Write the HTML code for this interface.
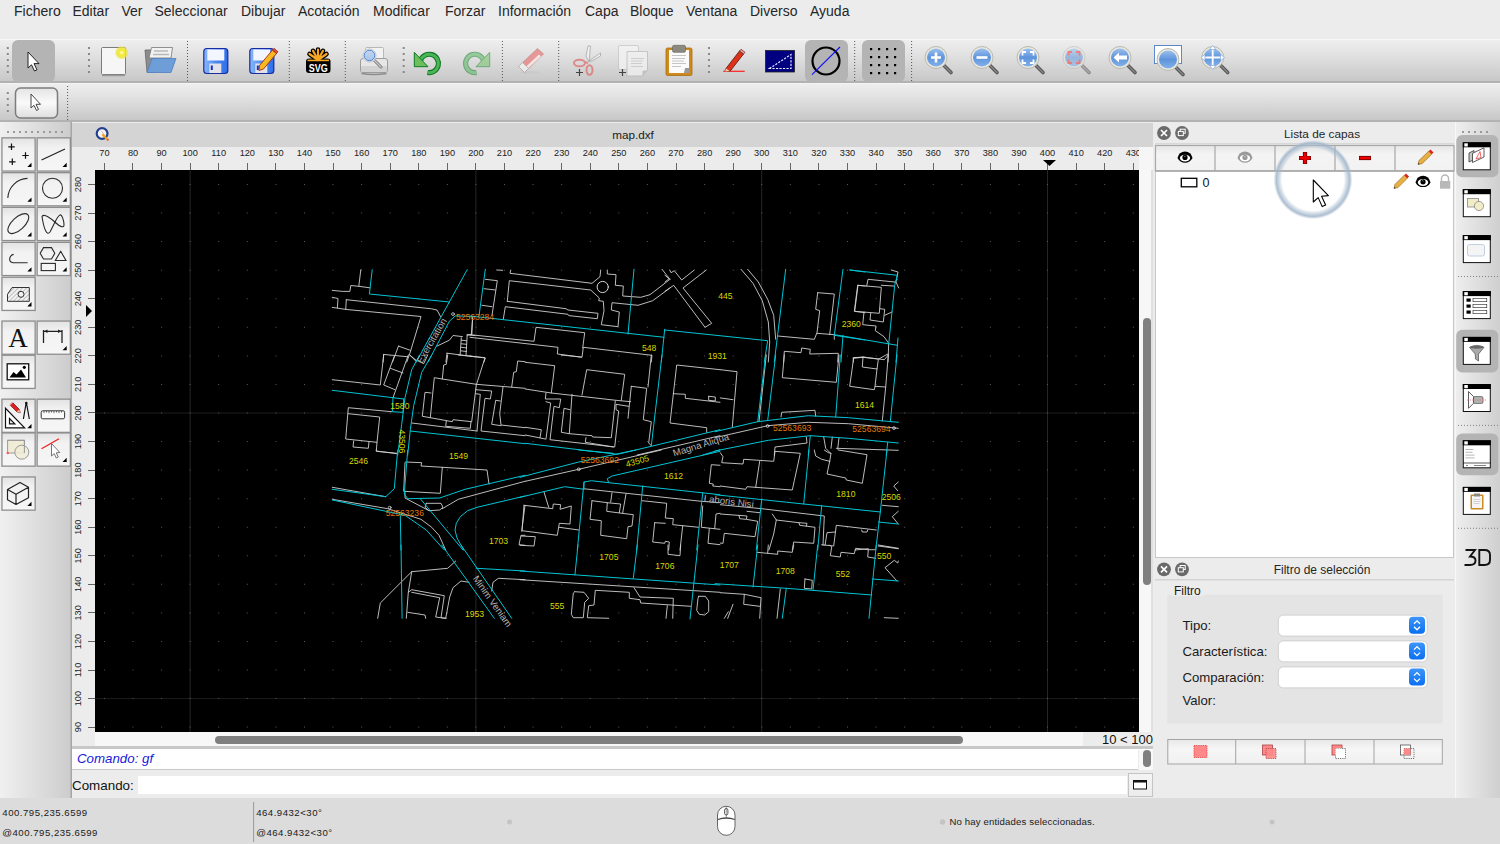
<!DOCTYPE html><html><head><meta charset="utf-8"><style>
*{box-sizing:border-box}
html,body{margin:0;padding:0;width:1500px;height:844px;overflow:hidden;background:#ececec;font-family:"Liberation Sans", sans-serif}
.a{position:absolute}
.menu span{position:absolute;top:3px;font-size:14px;color:#262626;line-height:16px}
.tb{position:absolute;left:0;width:1500px;background:linear-gradient(#eeeeee,#e2e2e2 35%,#c8c8c8);border-bottom:2px solid #b2b2b2}
.hl{position:absolute;background:#b4b4b4;border-radius:6px}
.sep{position:absolute;width:0;border-left:2px dotted #7a7a7a}
.hdl{position:absolute;width:3px;background:radial-gradient(circle,#8c8c8c 1px,transparent 1.3px) 0 0/3px 6px repeat-y}
.tbtn{position:absolute;width:35px;height:35px;border:2px solid #9c9c9c;background:linear-gradient(#f6f6f6,#e6e6e6 45%,#f6f6f6)}
</style></head><body><div class="a menu" style="left:0;top:0;width:1500px;height:39px;background:#ececec"><span style="left:14px">Fichero</span><span style="left:72.5px">Editar</span><span style="left:121.5px">Ver</span><span style="left:154.5px">Seleccionar</span><span style="left:241px">Dibujar</span><span style="left:298px">Acotación</span><span style="left:373px">Modificar</span><span style="left:445px">Forzar</span><span style="left:498px">Información</span><span style="left:585px">Capa</span><span style="left:630px">Bloque</span><span style="left:686px">Ventana</span><span style="left:750px">Diverso</span><span style="left:810px">Ayuda</span></div><div class="tb" style="top:39px;height:44px;border-top:1px solid #f8f8f8"></div><div class="tb" style="top:83px;height:39px;border-top:1px solid #f4f4f4"></div><div class="hl" style="left:12px;top:40px;width:43px;height:42px"></div><div class="hl" style="left:805px;top:40px;width:43px;height:42px"></div><div class="hl" style="left:862px;top:40px;width:43px;height:42px"></div><div class="a" style="left:0;top:122px;width:71px;height:676px;background:linear-gradient(90deg,#f0f0f0,#cdcdcd);border-right:1px solid #b8b8b8"></div><div class="a" style="left:71px;top:122px;width:1083px;height:676px;background:#ececec;border-left:1px solid #a8a8a8"></div><div class="a" style="left:72px;top:123px;width:1081px;height:24px;background:#d4d4d4"></div><div class="a" style="left:558px;top:128px;width:150px;text-align:center;font-size:11.7px;color:#1a1a1a">map.dxf</div><svg width="120" height="150" style="position:absolute;left:0;top:0"><circle cx="102.1" cy="133.5" r="5.4" fill="#f4f4f4" stroke="#22408e" stroke-width="2.2"/><path d="M101.5 131 L105 136" stroke="#d8a0a0" stroke-width="0.7"/><path d="M103 135 L107.5 139.5" stroke="#f0a020" stroke-width="2.2" stroke-linecap="round"/><circle cx="107.8" cy="139.8" r="1.1" fill="#e06060"/></svg><svg width="1500" height="844" style="position:absolute;left:0;top:0"><defs><clipPath id="rclip"><rect x="95" y="140" width="1044" height="35"/></clipPath><clipPath id="lclip"><rect x="72" y="170" width="23" height="562"/></clipPath></defs><rect x="72" y="147" width="1081" height="23" fill="#ececec"/><rect x="1139" y="147" width="14" height="23" fill="#f6f6f6"/><rect x="72" y="147" width="23" height="585" fill="#ececec"/><g clip-path="url(#rclip)"><line x1="104.5" y1="163" x2="104.5" y2="170" stroke="#666" stroke-width="1"/><text x="104.4" y="156.3" font-family=""Liberation Sans", sans-serif" font-size="9.2" fill="#222" text-anchor="middle">70</text><line x1="132.5" y1="163" x2="132.5" y2="170" stroke="#666" stroke-width="1"/><text x="133.0" y="156.3" font-family=""Liberation Sans", sans-serif" font-size="9.2" fill="#222" text-anchor="middle">80</text><line x1="161.5" y1="163" x2="161.5" y2="170" stroke="#666" stroke-width="1"/><text x="161.6" y="156.3" font-family=""Liberation Sans", sans-serif" font-size="9.2" fill="#222" text-anchor="middle">90</text><line x1="190.5" y1="163" x2="190.5" y2="170" stroke="#666" stroke-width="1"/><text x="190.1" y="156.3" font-family=""Liberation Sans", sans-serif" font-size="9.2" fill="#222" text-anchor="middle">100</text><line x1="218.5" y1="163" x2="218.5" y2="170" stroke="#666" stroke-width="1"/><text x="218.7" y="156.3" font-family=""Liberation Sans", sans-serif" font-size="9.2" fill="#222" text-anchor="middle">110</text><line x1="247.5" y1="163" x2="247.5" y2="170" stroke="#666" stroke-width="1"/><text x="247.3" y="156.3" font-family=""Liberation Sans", sans-serif" font-size="9.2" fill="#222" text-anchor="middle">120</text><line x1="275.5" y1="163" x2="275.5" y2="170" stroke="#666" stroke-width="1"/><text x="275.9" y="156.3" font-family=""Liberation Sans", sans-serif" font-size="9.2" fill="#222" text-anchor="middle">130</text><line x1="304.5" y1="163" x2="304.5" y2="170" stroke="#666" stroke-width="1"/><text x="304.5" y="156.3" font-family=""Liberation Sans", sans-serif" font-size="9.2" fill="#222" text-anchor="middle">140</text><line x1="333.5" y1="163" x2="333.5" y2="170" stroke="#666" stroke-width="1"/><text x="333.0" y="156.3" font-family=""Liberation Sans", sans-serif" font-size="9.2" fill="#222" text-anchor="middle">150</text><line x1="361.5" y1="163" x2="361.5" y2="170" stroke="#666" stroke-width="1"/><text x="361.6" y="156.3" font-family=""Liberation Sans", sans-serif" font-size="9.2" fill="#222" text-anchor="middle">160</text><line x1="390.5" y1="163" x2="390.5" y2="170" stroke="#666" stroke-width="1"/><text x="390.2" y="156.3" font-family=""Liberation Sans", sans-serif" font-size="9.2" fill="#222" text-anchor="middle">170</text><line x1="418.5" y1="163" x2="418.5" y2="170" stroke="#666" stroke-width="1"/><text x="418.8" y="156.3" font-family=""Liberation Sans", sans-serif" font-size="9.2" fill="#222" text-anchor="middle">180</text><line x1="447.5" y1="163" x2="447.5" y2="170" stroke="#666" stroke-width="1"/><text x="447.4" y="156.3" font-family=""Liberation Sans", sans-serif" font-size="9.2" fill="#222" text-anchor="middle">190</text><line x1="475.5" y1="163" x2="475.5" y2="170" stroke="#666" stroke-width="1"/><text x="475.9" y="156.3" font-family=""Liberation Sans", sans-serif" font-size="9.2" fill="#222" text-anchor="middle">200</text><line x1="504.5" y1="163" x2="504.5" y2="170" stroke="#666" stroke-width="1"/><text x="504.5" y="156.3" font-family=""Liberation Sans", sans-serif" font-size="9.2" fill="#222" text-anchor="middle">210</text><line x1="533.5" y1="163" x2="533.5" y2="170" stroke="#666" stroke-width="1"/><text x="533.1" y="156.3" font-family=""Liberation Sans", sans-serif" font-size="9.2" fill="#222" text-anchor="middle">220</text><line x1="561.5" y1="163" x2="561.5" y2="170" stroke="#666" stroke-width="1"/><text x="561.7" y="156.3" font-family=""Liberation Sans", sans-serif" font-size="9.2" fill="#222" text-anchor="middle">230</text><line x1="590.5" y1="163" x2="590.5" y2="170" stroke="#666" stroke-width="1"/><text x="590.3" y="156.3" font-family=""Liberation Sans", sans-serif" font-size="9.2" fill="#222" text-anchor="middle">240</text><line x1="618.5" y1="163" x2="618.5" y2="170" stroke="#666" stroke-width="1"/><text x="618.8" y="156.3" font-family=""Liberation Sans", sans-serif" font-size="9.2" fill="#222" text-anchor="middle">250</text><line x1="647.5" y1="163" x2="647.5" y2="170" stroke="#666" stroke-width="1"/><text x="647.4" y="156.3" font-family=""Liberation Sans", sans-serif" font-size="9.2" fill="#222" text-anchor="middle">260</text><line x1="676.5" y1="163" x2="676.5" y2="170" stroke="#666" stroke-width="1"/><text x="676.0" y="156.3" font-family=""Liberation Sans", sans-serif" font-size="9.2" fill="#222" text-anchor="middle">270</text><line x1="704.5" y1="163" x2="704.5" y2="170" stroke="#666" stroke-width="1"/><text x="704.6" y="156.3" font-family=""Liberation Sans", sans-serif" font-size="9.2" fill="#222" text-anchor="middle">280</text><line x1="733.5" y1="163" x2="733.5" y2="170" stroke="#666" stroke-width="1"/><text x="733.2" y="156.3" font-family=""Liberation Sans", sans-serif" font-size="9.2" fill="#222" text-anchor="middle">290</text><line x1="761.5" y1="163" x2="761.5" y2="170" stroke="#666" stroke-width="1"/><text x="761.7" y="156.3" font-family=""Liberation Sans", sans-serif" font-size="9.2" fill="#222" text-anchor="middle">300</text><line x1="790.5" y1="163" x2="790.5" y2="170" stroke="#666" stroke-width="1"/><text x="790.3" y="156.3" font-family=""Liberation Sans", sans-serif" font-size="9.2" fill="#222" text-anchor="middle">310</text><line x1="818.5" y1="163" x2="818.5" y2="170" stroke="#666" stroke-width="1"/><text x="818.9" y="156.3" font-family=""Liberation Sans", sans-serif" font-size="9.2" fill="#222" text-anchor="middle">320</text><line x1="847.5" y1="163" x2="847.5" y2="170" stroke="#666" stroke-width="1"/><text x="847.5" y="156.3" font-family=""Liberation Sans", sans-serif" font-size="9.2" fill="#222" text-anchor="middle">330</text><line x1="876.5" y1="163" x2="876.5" y2="170" stroke="#666" stroke-width="1"/><text x="876.1" y="156.3" font-family=""Liberation Sans", sans-serif" font-size="9.2" fill="#222" text-anchor="middle">340</text><line x1="904.5" y1="163" x2="904.5" y2="170" stroke="#666" stroke-width="1"/><text x="904.6" y="156.3" font-family=""Liberation Sans", sans-serif" font-size="9.2" fill="#222" text-anchor="middle">350</text><line x1="933.5" y1="163" x2="933.5" y2="170" stroke="#666" stroke-width="1"/><text x="933.2" y="156.3" font-family=""Liberation Sans", sans-serif" font-size="9.2" fill="#222" text-anchor="middle">360</text><line x1="961.5" y1="163" x2="961.5" y2="170" stroke="#666" stroke-width="1"/><text x="961.8" y="156.3" font-family=""Liberation Sans", sans-serif" font-size="9.2" fill="#222" text-anchor="middle">370</text><line x1="990.5" y1="163" x2="990.5" y2="170" stroke="#666" stroke-width="1"/><text x="990.4" y="156.3" font-family=""Liberation Sans", sans-serif" font-size="9.2" fill="#222" text-anchor="middle">380</text><line x1="1018.5" y1="163" x2="1018.5" y2="170" stroke="#666" stroke-width="1"/><text x="1019.0" y="156.3" font-family=""Liberation Sans", sans-serif" font-size="9.2" fill="#222" text-anchor="middle">390</text><line x1="1047.5" y1="163" x2="1047.5" y2="170" stroke="#666" stroke-width="1"/><text x="1047.5" y="156.3" font-family=""Liberation Sans", sans-serif" font-size="9.2" fill="#222" text-anchor="middle">400</text><line x1="1076.5" y1="163" x2="1076.5" y2="170" stroke="#666" stroke-width="1"/><text x="1076.1" y="156.3" font-family=""Liberation Sans", sans-serif" font-size="9.2" fill="#222" text-anchor="middle">410</text><line x1="1104.5" y1="163" x2="1104.5" y2="170" stroke="#666" stroke-width="1"/><text x="1104.7" y="156.3" font-family=""Liberation Sans", sans-serif" font-size="9.2" fill="#222" text-anchor="middle">420</text><line x1="1133.5" y1="163" x2="1133.5" y2="170" stroke="#666" stroke-width="1"/><text x="1133.3" y="156.3" font-family=""Liberation Sans", sans-serif" font-size="9.2" fill="#222" text-anchor="middle">430</text></g><g clip-path="url(#lclip)"><line x1="88" y1="184.5" x2="95" y2="184.5" stroke="#666" stroke-width="1"/><text transform="translate(81.2 184.5) rotate(-90)" font-family=""Liberation Sans", sans-serif" font-size="9.2" fill="#222" text-anchor="middle">280</text><line x1="88" y1="213.5" x2="95" y2="213.5" stroke="#666" stroke-width="1"/><text transform="translate(81.2 213.1) rotate(-90)" font-family=""Liberation Sans", sans-serif" font-size="9.2" fill="#222" text-anchor="middle">270</text><line x1="88" y1="241.5" x2="95" y2="241.5" stroke="#666" stroke-width="1"/><text transform="translate(81.2 241.6) rotate(-90)" font-family=""Liberation Sans", sans-serif" font-size="9.2" fill="#222" text-anchor="middle">260</text><line x1="88" y1="270.5" x2="95" y2="270.5" stroke="#666" stroke-width="1"/><text transform="translate(81.2 270.2) rotate(-90)" font-family=""Liberation Sans", sans-serif" font-size="9.2" fill="#222" text-anchor="middle">250</text><line x1="88" y1="298.5" x2="95" y2="298.5" stroke="#666" stroke-width="1"/><text transform="translate(81.2 298.7) rotate(-90)" font-family=""Liberation Sans", sans-serif" font-size="9.2" fill="#222" text-anchor="middle">240</text><line x1="88" y1="327.5" x2="95" y2="327.5" stroke="#666" stroke-width="1"/><text transform="translate(81.2 327.3) rotate(-90)" font-family=""Liberation Sans", sans-serif" font-size="9.2" fill="#222" text-anchor="middle">230</text><line x1="88" y1="355.5" x2="95" y2="355.5" stroke="#666" stroke-width="1"/><text transform="translate(81.2 355.9) rotate(-90)" font-family=""Liberation Sans", sans-serif" font-size="9.2" fill="#222" text-anchor="middle">220</text><line x1="88" y1="384.5" x2="95" y2="384.5" stroke="#666" stroke-width="1"/><text transform="translate(81.2 384.4) rotate(-90)" font-family=""Liberation Sans", sans-serif" font-size="9.2" fill="#222" text-anchor="middle">210</text><line x1="88" y1="412.5" x2="95" y2="412.5" stroke="#666" stroke-width="1"/><text transform="translate(81.2 413.0) rotate(-90)" font-family=""Liberation Sans", sans-serif" font-size="9.2" fill="#222" text-anchor="middle">200</text><line x1="88" y1="441.5" x2="95" y2="441.5" stroke="#666" stroke-width="1"/><text transform="translate(81.2 441.5) rotate(-90)" font-family=""Liberation Sans", sans-serif" font-size="9.2" fill="#222" text-anchor="middle">190</text><line x1="88" y1="470.5" x2="95" y2="470.5" stroke="#666" stroke-width="1"/><text transform="translate(81.2 470.1) rotate(-90)" font-family=""Liberation Sans", sans-serif" font-size="9.2" fill="#222" text-anchor="middle">180</text><line x1="88" y1="498.5" x2="95" y2="498.5" stroke="#666" stroke-width="1"/><text transform="translate(81.2 498.7) rotate(-90)" font-family=""Liberation Sans", sans-serif" font-size="9.2" fill="#222" text-anchor="middle">170</text><line x1="88" y1="527.5" x2="95" y2="527.5" stroke="#666" stroke-width="1"/><text transform="translate(81.2 527.2) rotate(-90)" font-family=""Liberation Sans", sans-serif" font-size="9.2" fill="#222" text-anchor="middle">160</text><line x1="88" y1="555.5" x2="95" y2="555.5" stroke="#666" stroke-width="1"/><text transform="translate(81.2 555.8) rotate(-90)" font-family=""Liberation Sans", sans-serif" font-size="9.2" fill="#222" text-anchor="middle">150</text><line x1="88" y1="584.5" x2="95" y2="584.5" stroke="#666" stroke-width="1"/><text transform="translate(81.2 584.3) rotate(-90)" font-family=""Liberation Sans", sans-serif" font-size="9.2" fill="#222" text-anchor="middle">140</text><line x1="88" y1="612.5" x2="95" y2="612.5" stroke="#666" stroke-width="1"/><text transform="translate(81.2 612.9) rotate(-90)" font-family=""Liberation Sans", sans-serif" font-size="9.2" fill="#222" text-anchor="middle">130</text><line x1="88" y1="641.5" x2="95" y2="641.5" stroke="#666" stroke-width="1"/><text transform="translate(81.2 641.5) rotate(-90)" font-family=""Liberation Sans", sans-serif" font-size="9.2" fill="#222" text-anchor="middle">120</text><line x1="88" y1="670.5" x2="95" y2="670.5" stroke="#666" stroke-width="1"/><text transform="translate(81.2 670.0) rotate(-90)" font-family=""Liberation Sans", sans-serif" font-size="9.2" fill="#222" text-anchor="middle">110</text><line x1="88" y1="698.5" x2="95" y2="698.5" stroke="#666" stroke-width="1"/><text transform="translate(81.2 698.6) rotate(-90)" font-family=""Liberation Sans", sans-serif" font-size="9.2" fill="#222" text-anchor="middle">100</text><line x1="88" y1="727.5" x2="95" y2="727.5" stroke="#666" stroke-width="1"/><text transform="translate(81.2 727.1) rotate(-90)" font-family=""Liberation Sans", sans-serif" font-size="9.2" fill="#222" text-anchor="middle">90</text></g><path d="M1043 160 L1056 160 L1049.5 166 Z" fill="#000"/><path d="M86 305 L92 311 L86 317 Z" fill="#000"/></svg><svg width="1500" height="844" style="position:absolute;left:0;top:0"><rect x="95" y="170" width="1044" height="562" fill="#000"/><line x1="190.1" y1="170" x2="190.1" y2="732" stroke="#262626" stroke-width="1"/><line x1="475.9" y1="170" x2="475.9" y2="732" stroke="#262626" stroke-width="1"/><line x1="761.7" y1="170" x2="761.7" y2="732" stroke="#262626" stroke-width="1"/><line x1="1047.5" y1="170" x2="1047.5" y2="732" stroke="#262626" stroke-width="1"/><line x1="95" y1="698.6" x2="1139" y2="698.6" stroke="#1c1c1c" stroke-width="1"/><line x1="95" y1="413.0" x2="1139" y2="413.0" stroke="#1c1c1c" stroke-width="1"/><path d="M103.9 184.0h1v1h-1zM103.9 212.6h1v1h-1zM103.9 241.1h1v1h-1zM103.9 269.7h1v1h-1zM103.9 298.2h1v1h-1zM103.9 326.8h1v1h-1zM103.9 355.4h1v1h-1zM103.9 383.9h1v1h-1zM103.9 412.5h1v1h-1zM103.9 441.0h1v1h-1zM103.9 469.6h1v1h-1zM103.9 498.2h1v1h-1zM103.9 526.7h1v1h-1zM103.9 555.3h1v1h-1zM103.9 583.8h1v1h-1zM103.9 612.4h1v1h-1zM103.9 641.0h1v1h-1zM103.9 669.5h1v1h-1zM103.9 698.1h1v1h-1zM103.9 726.6h1v1h-1zM132.5 184.0h1v1h-1zM132.5 212.6h1v1h-1zM132.5 241.1h1v1h-1zM132.5 269.7h1v1h-1zM132.5 298.2h1v1h-1zM132.5 326.8h1v1h-1zM132.5 355.4h1v1h-1zM132.5 383.9h1v1h-1zM132.5 412.5h1v1h-1zM132.5 441.0h1v1h-1zM132.5 469.6h1v1h-1zM132.5 498.2h1v1h-1zM132.5 526.7h1v1h-1zM132.5 555.3h1v1h-1zM132.5 583.8h1v1h-1zM132.5 612.4h1v1h-1zM132.5 641.0h1v1h-1zM132.5 669.5h1v1h-1zM132.5 698.1h1v1h-1zM132.5 726.6h1v1h-1zM161.1 184.0h1v1h-1zM161.1 212.6h1v1h-1zM161.1 241.1h1v1h-1zM161.1 269.7h1v1h-1zM161.1 298.2h1v1h-1zM161.1 326.8h1v1h-1zM161.1 355.4h1v1h-1zM161.1 383.9h1v1h-1zM161.1 412.5h1v1h-1zM161.1 441.0h1v1h-1zM161.1 469.6h1v1h-1zM161.1 498.2h1v1h-1zM161.1 526.7h1v1h-1zM161.1 555.3h1v1h-1zM161.1 583.8h1v1h-1zM161.1 612.4h1v1h-1zM161.1 641.0h1v1h-1zM161.1 669.5h1v1h-1zM161.1 698.1h1v1h-1zM161.1 726.6h1v1h-1zM189.6 184.0h1v1h-1zM189.6 212.6h1v1h-1zM189.6 241.1h1v1h-1zM189.6 269.7h1v1h-1zM189.6 298.2h1v1h-1zM189.6 326.8h1v1h-1zM189.6 355.4h1v1h-1zM189.6 383.9h1v1h-1zM189.6 412.5h1v1h-1zM189.6 441.0h1v1h-1zM189.6 469.6h1v1h-1zM189.6 498.2h1v1h-1zM189.6 526.7h1v1h-1zM189.6 555.3h1v1h-1zM189.6 583.8h1v1h-1zM189.6 612.4h1v1h-1zM189.6 641.0h1v1h-1zM189.6 669.5h1v1h-1zM189.6 698.1h1v1h-1zM189.6 726.6h1v1h-1zM218.2 184.0h1v1h-1zM218.2 212.6h1v1h-1zM218.2 241.1h1v1h-1zM218.2 269.7h1v1h-1zM218.2 298.2h1v1h-1zM218.2 326.8h1v1h-1zM218.2 355.4h1v1h-1zM218.2 383.9h1v1h-1zM218.2 412.5h1v1h-1zM218.2 441.0h1v1h-1zM218.2 469.6h1v1h-1zM218.2 498.2h1v1h-1zM218.2 526.7h1v1h-1zM218.2 555.3h1v1h-1zM218.2 583.8h1v1h-1zM218.2 612.4h1v1h-1zM218.2 641.0h1v1h-1zM218.2 669.5h1v1h-1zM218.2 698.1h1v1h-1zM218.2 726.6h1v1h-1zM246.8 184.0h1v1h-1zM246.8 212.6h1v1h-1zM246.8 241.1h1v1h-1zM246.8 269.7h1v1h-1zM246.8 298.2h1v1h-1zM246.8 326.8h1v1h-1zM246.8 355.4h1v1h-1zM246.8 383.9h1v1h-1zM246.8 412.5h1v1h-1zM246.8 441.0h1v1h-1zM246.8 469.6h1v1h-1zM246.8 498.2h1v1h-1zM246.8 526.7h1v1h-1zM246.8 555.3h1v1h-1zM246.8 583.8h1v1h-1zM246.8 612.4h1v1h-1zM246.8 641.0h1v1h-1zM246.8 669.5h1v1h-1zM246.8 698.1h1v1h-1zM246.8 726.6h1v1h-1zM275.4 184.0h1v1h-1zM275.4 212.6h1v1h-1zM275.4 241.1h1v1h-1zM275.4 269.7h1v1h-1zM275.4 298.2h1v1h-1zM275.4 326.8h1v1h-1zM275.4 355.4h1v1h-1zM275.4 383.9h1v1h-1zM275.4 412.5h1v1h-1zM275.4 441.0h1v1h-1zM275.4 469.6h1v1h-1zM275.4 498.2h1v1h-1zM275.4 526.7h1v1h-1zM275.4 555.3h1v1h-1zM275.4 583.8h1v1h-1zM275.4 612.4h1v1h-1zM275.4 641.0h1v1h-1zM275.4 669.5h1v1h-1zM275.4 698.1h1v1h-1zM275.4 726.6h1v1h-1zM304.0 184.0h1v1h-1zM304.0 212.6h1v1h-1zM304.0 241.1h1v1h-1zM304.0 269.7h1v1h-1zM304.0 298.2h1v1h-1zM304.0 326.8h1v1h-1zM304.0 355.4h1v1h-1zM304.0 383.9h1v1h-1zM304.0 412.5h1v1h-1zM304.0 441.0h1v1h-1zM304.0 469.6h1v1h-1zM304.0 498.2h1v1h-1zM304.0 526.7h1v1h-1zM304.0 555.3h1v1h-1zM304.0 583.8h1v1h-1zM304.0 612.4h1v1h-1zM304.0 641.0h1v1h-1zM304.0 669.5h1v1h-1zM304.0 698.1h1v1h-1zM304.0 726.6h1v1h-1zM332.5 184.0h1v1h-1zM332.5 212.6h1v1h-1zM332.5 241.1h1v1h-1zM332.5 269.7h1v1h-1zM332.5 298.2h1v1h-1zM332.5 326.8h1v1h-1zM332.5 355.4h1v1h-1zM332.5 383.9h1v1h-1zM332.5 412.5h1v1h-1zM332.5 441.0h1v1h-1zM332.5 469.6h1v1h-1zM332.5 498.2h1v1h-1zM332.5 526.7h1v1h-1zM332.5 555.3h1v1h-1zM332.5 583.8h1v1h-1zM332.5 612.4h1v1h-1zM332.5 641.0h1v1h-1zM332.5 669.5h1v1h-1zM332.5 698.1h1v1h-1zM332.5 726.6h1v1h-1zM361.1 184.0h1v1h-1zM361.1 212.6h1v1h-1zM361.1 241.1h1v1h-1zM361.1 269.7h1v1h-1zM361.1 298.2h1v1h-1zM361.1 326.8h1v1h-1zM361.1 355.4h1v1h-1zM361.1 383.9h1v1h-1zM361.1 412.5h1v1h-1zM361.1 441.0h1v1h-1zM361.1 469.6h1v1h-1zM361.1 498.2h1v1h-1zM361.1 526.7h1v1h-1zM361.1 555.3h1v1h-1zM361.1 583.8h1v1h-1zM361.1 612.4h1v1h-1zM361.1 641.0h1v1h-1zM361.1 669.5h1v1h-1zM361.1 698.1h1v1h-1zM361.1 726.6h1v1h-1zM389.7 184.0h1v1h-1zM389.7 212.6h1v1h-1zM389.7 241.1h1v1h-1zM389.7 269.7h1v1h-1zM389.7 298.2h1v1h-1zM389.7 326.8h1v1h-1zM389.7 355.4h1v1h-1zM389.7 383.9h1v1h-1zM389.7 412.5h1v1h-1zM389.7 441.0h1v1h-1zM389.7 469.6h1v1h-1zM389.7 498.2h1v1h-1zM389.7 526.7h1v1h-1zM389.7 555.3h1v1h-1zM389.7 583.8h1v1h-1zM389.7 612.4h1v1h-1zM389.7 641.0h1v1h-1zM389.7 669.5h1v1h-1zM389.7 698.1h1v1h-1zM389.7 726.6h1v1h-1zM418.3 184.0h1v1h-1zM418.3 212.6h1v1h-1zM418.3 241.1h1v1h-1zM418.3 269.7h1v1h-1zM418.3 298.2h1v1h-1zM418.3 326.8h1v1h-1zM418.3 355.4h1v1h-1zM418.3 383.9h1v1h-1zM418.3 412.5h1v1h-1zM418.3 441.0h1v1h-1zM418.3 469.6h1v1h-1zM418.3 498.2h1v1h-1zM418.3 526.7h1v1h-1zM418.3 555.3h1v1h-1zM418.3 583.8h1v1h-1zM418.3 612.4h1v1h-1zM418.3 641.0h1v1h-1zM418.3 669.5h1v1h-1zM418.3 698.1h1v1h-1zM418.3 726.6h1v1h-1zM446.9 184.0h1v1h-1zM446.9 212.6h1v1h-1zM446.9 241.1h1v1h-1zM446.9 269.7h1v1h-1zM446.9 298.2h1v1h-1zM446.9 326.8h1v1h-1zM446.9 355.4h1v1h-1zM446.9 383.9h1v1h-1zM446.9 412.5h1v1h-1zM446.9 441.0h1v1h-1zM446.9 469.6h1v1h-1zM446.9 498.2h1v1h-1zM446.9 526.7h1v1h-1zM446.9 555.3h1v1h-1zM446.9 583.8h1v1h-1zM446.9 612.4h1v1h-1zM446.9 641.0h1v1h-1zM446.9 669.5h1v1h-1zM446.9 698.1h1v1h-1zM446.9 726.6h1v1h-1zM475.4 184.0h1v1h-1zM475.4 212.6h1v1h-1zM475.4 241.1h1v1h-1zM475.4 269.7h1v1h-1zM475.4 298.2h1v1h-1zM475.4 326.8h1v1h-1zM475.4 355.4h1v1h-1zM475.4 383.9h1v1h-1zM475.4 412.5h1v1h-1zM475.4 441.0h1v1h-1zM475.4 469.6h1v1h-1zM475.4 498.2h1v1h-1zM475.4 526.7h1v1h-1zM475.4 555.3h1v1h-1zM475.4 583.8h1v1h-1zM475.4 612.4h1v1h-1zM475.4 641.0h1v1h-1zM475.4 669.5h1v1h-1zM475.4 698.1h1v1h-1zM475.4 726.6h1v1h-1zM504.0 184.0h1v1h-1zM504.0 212.6h1v1h-1zM504.0 241.1h1v1h-1zM504.0 269.7h1v1h-1zM504.0 298.2h1v1h-1zM504.0 326.8h1v1h-1zM504.0 355.4h1v1h-1zM504.0 383.9h1v1h-1zM504.0 412.5h1v1h-1zM504.0 441.0h1v1h-1zM504.0 469.6h1v1h-1zM504.0 498.2h1v1h-1zM504.0 526.7h1v1h-1zM504.0 555.3h1v1h-1zM504.0 583.8h1v1h-1zM504.0 612.4h1v1h-1zM504.0 641.0h1v1h-1zM504.0 669.5h1v1h-1zM504.0 698.1h1v1h-1zM504.0 726.6h1v1h-1zM532.6 184.0h1v1h-1zM532.6 212.6h1v1h-1zM532.6 241.1h1v1h-1zM532.6 269.7h1v1h-1zM532.6 298.2h1v1h-1zM532.6 326.8h1v1h-1zM532.6 355.4h1v1h-1zM532.6 383.9h1v1h-1zM532.6 412.5h1v1h-1zM532.6 441.0h1v1h-1zM532.6 469.6h1v1h-1zM532.6 498.2h1v1h-1zM532.6 526.7h1v1h-1zM532.6 555.3h1v1h-1zM532.6 583.8h1v1h-1zM532.6 612.4h1v1h-1zM532.6 641.0h1v1h-1zM532.6 669.5h1v1h-1zM532.6 698.1h1v1h-1zM532.6 726.6h1v1h-1zM561.2 184.0h1v1h-1zM561.2 212.6h1v1h-1zM561.2 241.1h1v1h-1zM561.2 269.7h1v1h-1zM561.2 298.2h1v1h-1zM561.2 326.8h1v1h-1zM561.2 355.4h1v1h-1zM561.2 383.9h1v1h-1zM561.2 412.5h1v1h-1zM561.2 441.0h1v1h-1zM561.2 469.6h1v1h-1zM561.2 498.2h1v1h-1zM561.2 526.7h1v1h-1zM561.2 555.3h1v1h-1zM561.2 583.8h1v1h-1zM561.2 612.4h1v1h-1zM561.2 641.0h1v1h-1zM561.2 669.5h1v1h-1zM561.2 698.1h1v1h-1zM561.2 726.6h1v1h-1zM589.8 184.0h1v1h-1zM589.8 212.6h1v1h-1zM589.8 241.1h1v1h-1zM589.8 269.7h1v1h-1zM589.8 298.2h1v1h-1zM589.8 326.8h1v1h-1zM589.8 355.4h1v1h-1zM589.8 383.9h1v1h-1zM589.8 412.5h1v1h-1zM589.8 441.0h1v1h-1zM589.8 469.6h1v1h-1zM589.8 498.2h1v1h-1zM589.8 526.7h1v1h-1zM589.8 555.3h1v1h-1zM589.8 583.8h1v1h-1zM589.8 612.4h1v1h-1zM589.8 641.0h1v1h-1zM589.8 669.5h1v1h-1zM589.8 698.1h1v1h-1zM589.8 726.6h1v1h-1zM618.3 184.0h1v1h-1zM618.3 212.6h1v1h-1zM618.3 241.1h1v1h-1zM618.3 269.7h1v1h-1zM618.3 298.2h1v1h-1zM618.3 326.8h1v1h-1zM618.3 355.4h1v1h-1zM618.3 383.9h1v1h-1zM618.3 412.5h1v1h-1zM618.3 441.0h1v1h-1zM618.3 469.6h1v1h-1zM618.3 498.2h1v1h-1zM618.3 526.7h1v1h-1zM618.3 555.3h1v1h-1zM618.3 583.8h1v1h-1zM618.3 612.4h1v1h-1zM618.3 641.0h1v1h-1zM618.3 669.5h1v1h-1zM618.3 698.1h1v1h-1zM618.3 726.6h1v1h-1zM646.9 184.0h1v1h-1zM646.9 212.6h1v1h-1zM646.9 241.1h1v1h-1zM646.9 269.7h1v1h-1zM646.9 298.2h1v1h-1zM646.9 326.8h1v1h-1zM646.9 355.4h1v1h-1zM646.9 383.9h1v1h-1zM646.9 412.5h1v1h-1zM646.9 441.0h1v1h-1zM646.9 469.6h1v1h-1zM646.9 498.2h1v1h-1zM646.9 526.7h1v1h-1zM646.9 555.3h1v1h-1zM646.9 583.8h1v1h-1zM646.9 612.4h1v1h-1zM646.9 641.0h1v1h-1zM646.9 669.5h1v1h-1zM646.9 698.1h1v1h-1zM646.9 726.6h1v1h-1zM675.5 184.0h1v1h-1zM675.5 212.6h1v1h-1zM675.5 241.1h1v1h-1zM675.5 269.7h1v1h-1zM675.5 298.2h1v1h-1zM675.5 326.8h1v1h-1zM675.5 355.4h1v1h-1zM675.5 383.9h1v1h-1zM675.5 412.5h1v1h-1zM675.5 441.0h1v1h-1zM675.5 469.6h1v1h-1zM675.5 498.2h1v1h-1zM675.5 526.7h1v1h-1zM675.5 555.3h1v1h-1zM675.5 583.8h1v1h-1zM675.5 612.4h1v1h-1zM675.5 641.0h1v1h-1zM675.5 669.5h1v1h-1zM675.5 698.1h1v1h-1zM675.5 726.6h1v1h-1zM704.1 184.0h1v1h-1zM704.1 212.6h1v1h-1zM704.1 241.1h1v1h-1zM704.1 269.7h1v1h-1zM704.1 298.2h1v1h-1zM704.1 326.8h1v1h-1zM704.1 355.4h1v1h-1zM704.1 383.9h1v1h-1zM704.1 412.5h1v1h-1zM704.1 441.0h1v1h-1zM704.1 469.6h1v1h-1zM704.1 498.2h1v1h-1zM704.1 526.7h1v1h-1zM704.1 555.3h1v1h-1zM704.1 583.8h1v1h-1zM704.1 612.4h1v1h-1zM704.1 641.0h1v1h-1zM704.1 669.5h1v1h-1zM704.1 698.1h1v1h-1zM704.1 726.6h1v1h-1zM732.7 184.0h1v1h-1zM732.7 212.6h1v1h-1zM732.7 241.1h1v1h-1zM732.7 269.7h1v1h-1zM732.7 298.2h1v1h-1zM732.7 326.8h1v1h-1zM732.7 355.4h1v1h-1zM732.7 383.9h1v1h-1zM732.7 412.5h1v1h-1zM732.7 441.0h1v1h-1zM732.7 469.6h1v1h-1zM732.7 498.2h1v1h-1zM732.7 526.7h1v1h-1zM732.7 555.3h1v1h-1zM732.7 583.8h1v1h-1zM732.7 612.4h1v1h-1zM732.7 641.0h1v1h-1zM732.7 669.5h1v1h-1zM732.7 698.1h1v1h-1zM732.7 726.6h1v1h-1zM761.2 184.0h1v1h-1zM761.2 212.6h1v1h-1zM761.2 241.1h1v1h-1zM761.2 269.7h1v1h-1zM761.2 298.2h1v1h-1zM761.2 326.8h1v1h-1zM761.2 355.4h1v1h-1zM761.2 383.9h1v1h-1zM761.2 412.5h1v1h-1zM761.2 441.0h1v1h-1zM761.2 469.6h1v1h-1zM761.2 498.2h1v1h-1zM761.2 526.7h1v1h-1zM761.2 555.3h1v1h-1zM761.2 583.8h1v1h-1zM761.2 612.4h1v1h-1zM761.2 641.0h1v1h-1zM761.2 669.5h1v1h-1zM761.2 698.1h1v1h-1zM761.2 726.6h1v1h-1zM789.8 184.0h1v1h-1zM789.8 212.6h1v1h-1zM789.8 241.1h1v1h-1zM789.8 269.7h1v1h-1zM789.8 298.2h1v1h-1zM789.8 326.8h1v1h-1zM789.8 355.4h1v1h-1zM789.8 383.9h1v1h-1zM789.8 412.5h1v1h-1zM789.8 441.0h1v1h-1zM789.8 469.6h1v1h-1zM789.8 498.2h1v1h-1zM789.8 526.7h1v1h-1zM789.8 555.3h1v1h-1zM789.8 583.8h1v1h-1zM789.8 612.4h1v1h-1zM789.8 641.0h1v1h-1zM789.8 669.5h1v1h-1zM789.8 698.1h1v1h-1zM789.8 726.6h1v1h-1zM818.4 184.0h1v1h-1zM818.4 212.6h1v1h-1zM818.4 241.1h1v1h-1zM818.4 269.7h1v1h-1zM818.4 298.2h1v1h-1zM818.4 326.8h1v1h-1zM818.4 355.4h1v1h-1zM818.4 383.9h1v1h-1zM818.4 412.5h1v1h-1zM818.4 441.0h1v1h-1zM818.4 469.6h1v1h-1zM818.4 498.2h1v1h-1zM818.4 526.7h1v1h-1zM818.4 555.3h1v1h-1zM818.4 583.8h1v1h-1zM818.4 612.4h1v1h-1zM818.4 641.0h1v1h-1zM818.4 669.5h1v1h-1zM818.4 698.1h1v1h-1zM818.4 726.6h1v1h-1zM847.0 184.0h1v1h-1zM847.0 212.6h1v1h-1zM847.0 241.1h1v1h-1zM847.0 269.7h1v1h-1zM847.0 298.2h1v1h-1zM847.0 326.8h1v1h-1zM847.0 355.4h1v1h-1zM847.0 383.9h1v1h-1zM847.0 412.5h1v1h-1zM847.0 441.0h1v1h-1zM847.0 469.6h1v1h-1zM847.0 498.2h1v1h-1zM847.0 526.7h1v1h-1zM847.0 555.3h1v1h-1zM847.0 583.8h1v1h-1zM847.0 612.4h1v1h-1zM847.0 641.0h1v1h-1zM847.0 669.5h1v1h-1zM847.0 698.1h1v1h-1zM847.0 726.6h1v1h-1zM875.6 184.0h1v1h-1zM875.6 212.6h1v1h-1zM875.6 241.1h1v1h-1zM875.6 269.7h1v1h-1zM875.6 298.2h1v1h-1zM875.6 326.8h1v1h-1zM875.6 355.4h1v1h-1zM875.6 383.9h1v1h-1zM875.6 412.5h1v1h-1zM875.6 441.0h1v1h-1zM875.6 469.6h1v1h-1zM875.6 498.2h1v1h-1zM875.6 526.7h1v1h-1zM875.6 555.3h1v1h-1zM875.6 583.8h1v1h-1zM875.6 612.4h1v1h-1zM875.6 641.0h1v1h-1zM875.6 669.5h1v1h-1zM875.6 698.1h1v1h-1zM875.6 726.6h1v1h-1zM904.1 184.0h1v1h-1zM904.1 212.6h1v1h-1zM904.1 241.1h1v1h-1zM904.1 269.7h1v1h-1zM904.1 298.2h1v1h-1zM904.1 326.8h1v1h-1zM904.1 355.4h1v1h-1zM904.1 383.9h1v1h-1zM904.1 412.5h1v1h-1zM904.1 441.0h1v1h-1zM904.1 469.6h1v1h-1zM904.1 498.2h1v1h-1zM904.1 526.7h1v1h-1zM904.1 555.3h1v1h-1zM904.1 583.8h1v1h-1zM904.1 612.4h1v1h-1zM904.1 641.0h1v1h-1zM904.1 669.5h1v1h-1zM904.1 698.1h1v1h-1zM904.1 726.6h1v1h-1zM932.7 184.0h1v1h-1zM932.7 212.6h1v1h-1zM932.7 241.1h1v1h-1zM932.7 269.7h1v1h-1zM932.7 298.2h1v1h-1zM932.7 326.8h1v1h-1zM932.7 355.4h1v1h-1zM932.7 383.9h1v1h-1zM932.7 412.5h1v1h-1zM932.7 441.0h1v1h-1zM932.7 469.6h1v1h-1zM932.7 498.2h1v1h-1zM932.7 526.7h1v1h-1zM932.7 555.3h1v1h-1zM932.7 583.8h1v1h-1zM932.7 612.4h1v1h-1zM932.7 641.0h1v1h-1zM932.7 669.5h1v1h-1zM932.7 698.1h1v1h-1zM932.7 726.6h1v1h-1zM961.3 184.0h1v1h-1zM961.3 212.6h1v1h-1zM961.3 241.1h1v1h-1zM961.3 269.7h1v1h-1zM961.3 298.2h1v1h-1zM961.3 326.8h1v1h-1zM961.3 355.4h1v1h-1zM961.3 383.9h1v1h-1zM961.3 412.5h1v1h-1zM961.3 441.0h1v1h-1zM961.3 469.6h1v1h-1zM961.3 498.2h1v1h-1zM961.3 526.7h1v1h-1zM961.3 555.3h1v1h-1zM961.3 583.8h1v1h-1zM961.3 612.4h1v1h-1zM961.3 641.0h1v1h-1zM961.3 669.5h1v1h-1zM961.3 698.1h1v1h-1zM961.3 726.6h1v1h-1zM989.9 184.0h1v1h-1zM989.9 212.6h1v1h-1zM989.9 241.1h1v1h-1zM989.9 269.7h1v1h-1zM989.9 298.2h1v1h-1zM989.9 326.8h1v1h-1zM989.9 355.4h1v1h-1zM989.9 383.9h1v1h-1zM989.9 412.5h1v1h-1zM989.9 441.0h1v1h-1zM989.9 469.6h1v1h-1zM989.9 498.2h1v1h-1zM989.9 526.7h1v1h-1zM989.9 555.3h1v1h-1zM989.9 583.8h1v1h-1zM989.9 612.4h1v1h-1zM989.9 641.0h1v1h-1zM989.9 669.5h1v1h-1zM989.9 698.1h1v1h-1zM989.9 726.6h1v1h-1zM1018.5 184.0h1v1h-1zM1018.5 212.6h1v1h-1zM1018.5 241.1h1v1h-1zM1018.5 269.7h1v1h-1zM1018.5 298.2h1v1h-1zM1018.5 326.8h1v1h-1zM1018.5 355.4h1v1h-1zM1018.5 383.9h1v1h-1zM1018.5 412.5h1v1h-1zM1018.5 441.0h1v1h-1zM1018.5 469.6h1v1h-1zM1018.5 498.2h1v1h-1zM1018.5 526.7h1v1h-1zM1018.5 555.3h1v1h-1zM1018.5 583.8h1v1h-1zM1018.5 612.4h1v1h-1zM1018.5 641.0h1v1h-1zM1018.5 669.5h1v1h-1zM1018.5 698.1h1v1h-1zM1018.5 726.6h1v1h-1zM1047.0 184.0h1v1h-1zM1047.0 212.6h1v1h-1zM1047.0 241.1h1v1h-1zM1047.0 269.7h1v1h-1zM1047.0 298.2h1v1h-1zM1047.0 326.8h1v1h-1zM1047.0 355.4h1v1h-1zM1047.0 383.9h1v1h-1zM1047.0 412.5h1v1h-1zM1047.0 441.0h1v1h-1zM1047.0 469.6h1v1h-1zM1047.0 498.2h1v1h-1zM1047.0 526.7h1v1h-1zM1047.0 555.3h1v1h-1zM1047.0 583.8h1v1h-1zM1047.0 612.4h1v1h-1zM1047.0 641.0h1v1h-1zM1047.0 669.5h1v1h-1zM1047.0 698.1h1v1h-1zM1047.0 726.6h1v1h-1zM1075.6 184.0h1v1h-1zM1075.6 212.6h1v1h-1zM1075.6 241.1h1v1h-1zM1075.6 269.7h1v1h-1zM1075.6 298.2h1v1h-1zM1075.6 326.8h1v1h-1zM1075.6 355.4h1v1h-1zM1075.6 383.9h1v1h-1zM1075.6 412.5h1v1h-1zM1075.6 441.0h1v1h-1zM1075.6 469.6h1v1h-1zM1075.6 498.2h1v1h-1zM1075.6 526.7h1v1h-1zM1075.6 555.3h1v1h-1zM1075.6 583.8h1v1h-1zM1075.6 612.4h1v1h-1zM1075.6 641.0h1v1h-1zM1075.6 669.5h1v1h-1zM1075.6 698.1h1v1h-1zM1075.6 726.6h1v1h-1zM1104.2 184.0h1v1h-1zM1104.2 212.6h1v1h-1zM1104.2 241.1h1v1h-1zM1104.2 269.7h1v1h-1zM1104.2 298.2h1v1h-1zM1104.2 326.8h1v1h-1zM1104.2 355.4h1v1h-1zM1104.2 383.9h1v1h-1zM1104.2 412.5h1v1h-1zM1104.2 441.0h1v1h-1zM1104.2 469.6h1v1h-1zM1104.2 498.2h1v1h-1zM1104.2 526.7h1v1h-1zM1104.2 555.3h1v1h-1zM1104.2 583.8h1v1h-1zM1104.2 612.4h1v1h-1zM1104.2 641.0h1v1h-1zM1104.2 669.5h1v1h-1zM1104.2 698.1h1v1h-1zM1104.2 726.6h1v1h-1zM1132.8 184.0h1v1h-1zM1132.8 212.6h1v1h-1zM1132.8 241.1h1v1h-1zM1132.8 269.7h1v1h-1zM1132.8 298.2h1v1h-1zM1132.8 326.8h1v1h-1zM1132.8 355.4h1v1h-1zM1132.8 383.9h1v1h-1zM1132.8 412.5h1v1h-1zM1132.8 441.0h1v1h-1zM1132.8 469.6h1v1h-1zM1132.8 498.2h1v1h-1zM1132.8 526.7h1v1h-1zM1132.8 555.3h1v1h-1zM1132.8 583.8h1v1h-1zM1132.8 612.4h1v1h-1zM1132.8 641.0h1v1h-1zM1132.8 669.5h1v1h-1zM1132.8 698.1h1v1h-1zM1132.8 726.6h1v1h-1z" fill="#5a5a5a"/></svg><svg width="1500" height="844" style="position:absolute;left:0;top:0"><g fill="none" stroke-linejoin="round" stroke-linecap="round"><path d="M360.8 269.7 L358.8 286.3 M332.3 290.4 L342.8 291.4 L349.9 291.4 L350.8 285.5 L358.8 286.3 L369.8 287.8 M332.3 297.3 L338.0 298.5 L337.4 307.6 M332.3 307.4 L345.7 309.4 L389.0 313.5 L421.0 316.5 L410.3 352.0 L406.8 362.0 M346.3 299.7 L345.7 309.4 M346.3 299.7 L431.6 308.8 L437.0 310.0 L440.5 316.5 M398.5 346.1 L410.3 350.3 M398.5 346.1 L392.5 362.0 M383.6 354.4 L407.9 356.8 M383.6 354.4 L383.1 362.0 M410.3 355.6 L416.8 362.0 M472.5 320.1 L471.9 334.3 L467.2 334.9 M447.0 353.2 L445.9 362.0 M447.0 353.2 L475.0 356.8 M467.2 334.9 L475.0 335.5 M467.2 334.9 L466.0 355.6 M461.3 337.8 L460.1 355.0 M461.3 340.2 L466.6 340.8 M461.3 343.8 L466.6 344.3 M461.3 347.3 L466.6 347.9 M461.3 350.9 L466.6 351.5 M437.0 346.1 L449.4 340.2 L453.0 335.5 L462.4 336.6 M485.3 279.3 L497.3 280.7 L492.0 315.3 M484.0 288.7 L495.3 290.0 M482.0 305.3 L492.0 306.7 M496.7 270.0 L502.7 270.3 M510.7 270.0 L510.0 273.3 L592.0 283.3 L600.0 276.7 L600.7 270.0 M507.3 301.3 L509.3 280.7 L590.7 290.0 L599.3 298.0 L598.7 300.7 L603.3 301.3 L604.0 310.7 L601.3 324.7 L618.0 326.7 L619.3 312.0 L611.3 310.0 L612.0 302.7 L638.0 305.3 L652.7 300.7 L670.0 288.0 M607.3 270.0 L607.3 274.0 L616.0 274.7 L615.3 285.3 L623.3 286.0 L622.7 296.0 L640.7 297.3 L650.0 294.7 L670.0 279.3 M662.0 269.3 L670.0 279.3 M507.3 301.3 L566.0 308.7 L568.0 310.0 L598.0 313.3 L597.3 318.7 L568.7 315.6 L568.0 314.3 L505.3 306.7 L503.3 319.3 M472.7 316.7 L471.3 334.7 M470.0 334.7 L534.0 341.3 L536.0 327.3 L584.7 332.7 L582.7 348.0 M470.0 337.3 L558.0 347.3 L557.3 354.0 L582.0 357.3 L583.3 347.3 L652.0 355.3 L651.3 362.0 M470.0 356.0 L485.3 358.0 L484.0 362.0 M669.7 270.0 L671.0 272.7 L674.3 270.7 L681.7 280.0 L694.3 270.0 M665.0 291.3 L673.7 285.3 L705.0 327.3 L711.7 323.3 L683.0 288.0 L706.3 270.0 M665.0 275.3 L669.0 278.7 L665.0 282.0 M741.0 269.3 L753.0 283.3 L762.3 300.7 L768.3 322.0 L769.7 342.0 L768.3 362.0 M747.7 269.3 L758.3 282.0 L767.7 299.3 L773.7 315.3 L775.7 339.3 M817.7 292.7 L834.3 294.0 L829.7 334.7 M817.7 292.7 L815.7 309.3 L819.7 310.7 L817.0 332.7 L814.3 339.3 L777.7 336.0 M817.0 333.3 L834.3 334.7 L834.3 339.3 M865.0 286.0 L857.7 285.3 L854.3 311.3 L865.0 312.7 M783.7 362.0 L784.3 351.3 L801.0 352.7 L801.7 348.0 L810.3 349.3 L809.7 354.0 L838.3 353.3 L837.7 362.0 M853.0 358.0 L865.0 357.3 M891.3 270.0 L898.0 272.0 L896.0 282.0 L898.7 288.0 M866.7 286.0 L868.0 279.3 L894.7 282.0 M858.0 285.3 L881.3 287.3 L879.3 313.3 L854.7 311.3 L858.0 285.3 M881.3 285.3 L894.0 286.0 M870.7 313.3 L870.0 320.0 L883.3 322.0 L884.7 309.3 L880.0 308.7 M864.0 312.0 L862.7 324.7 L876.0 326.0 L875.3 330.7 L884.0 336.7 L888.7 343.3 L888.0 362.0 M884.7 315.3 L892.0 312.0 M853.3 362.0 L853.3 358.0 L862.7 357.3 L878.7 359.1 L885.3 355.3 L888.0 354.0 M383.7 355.0 L380.3 385.0 L332.3 379.7 M394.3 356.3 L383.7 385.0 L395.0 389.7 M390.3 368.3 L403.0 373.0 M408.3 355.0 L393.0 397.7 M409.7 355.0 L417.0 361.0 M418.3 361.0 L423.7 363.7 L427.7 355.0 M391.7 411.7 L348.3 407.7 L345.7 439.0 L377.0 442.3 L376.3 451.0 L397.0 453.7 M348.3 413.7 L379.7 417.0 L377.0 442.3 M353.7 441.0 L353.0 447.0 L368.3 448.3 L369.0 441.7 M447.7 355.0 L446.3 364.3 L443.7 365.0 L442.3 379.0 L434.3 377.7 L430.3 417.7 L452.3 421.7 L453.0 419.7 L471.7 421.7 L476.3 385.0 L485.0 357.7 L458.3 355.0 M442.3 379.0 L476.3 384.3 L525.0 388.3 M431.0 393.0 L425.0 392.3 L422.3 416.3 L430.3 417.7 M446.3 421.0 L445.7 426.3 L470.3 428.3 L471.0 421.7 M475.7 389.7 L491.7 391.0 L490.3 399.0 L485.0 398.3 L481.0 431.0 L525.0 435.7 M475.7 393.7 L480.3 394.3 L477.0 431.0 M525.0 361.7 L517.7 361.0 L516.3 371.7 L513.7 372.3 L511.7 387.0 M503.0 387.0 L499.7 413.7 L501.0 425.0 L525.0 427.7 M500.3 401.0 L495.7 400.3 L491.7 424.3 L501.0 425.7 M411.7 423.0 L477.0 431.0 M525.3 362.3 L554.7 365.7 L551.3 393.0 M525.3 389.0 L551.3 393.0 L616.0 400.3 L630.7 401.7 M582.0 395.0 L584.7 380.3 L586.7 369.7 L624.7 374.3 L621.3 400.3 M546.0 393.0 L545.3 399.0 L560.7 399.0 L559.3 407.7 L554.0 406.3 L550.0 439.7 L614.7 447.0 L618.7 411.0 L616.0 409.7 L616.0 404.3 L628.7 406.3 M572.0 394.3 L569.3 433.7 L592.0 435.7 L592.7 437.0 L611.3 437.7 L615.3 401.0 M570.0 409.7 L564.0 408.3 L561.3 432.3 L569.3 433.7 M546.0 401.7 L550.7 403.0 L546.0 439.0 M525.3 427.3 L541.3 429.7 L540.0 437.7 M525.3 435.0 L545.3 439.0 M586.0 437.7 L585.3 442.3 L613.3 447.0 M631.3 386.3 L646.7 388.3 L643.3 419.7 L651.3 421.7 L648.7 443.0 L651.3 445.7 M631.3 386.3 L628.0 418.3 M651.3 355.0 L648.0 387.0 M561.3 355.0 L581.3 357.0 M720.0 369.7 L676.7 365.0 L670.0 423.0 L706.7 427.7 L706.7 432.3 M673.3 393.7 L685.3 394.3 L685.3 398.3 L720.0 402.3 M708.7 396.3 L715.3 397.0 L715.3 401.0 L708.7 400.3 L708.7 396.3 M637.3 455.0 L720.0 435.7 M720.3 369.7 L737.0 371.7 L732.3 427.0 M720.3 397.9 L733.0 399.7 M766.3 355.0 L759.0 421.7 M784.3 355.0 L782.3 377.7 L836.3 382.3 L839.0 355.0 M781.0 417.0 L781.7 412.3 L815.0 410.3 L815.7 416.3 M888.3 355.0 L884.3 359.7 L863.0 357.0 L853.7 357.7 L849.7 386.3 L874.3 389.7 L875.0 386.3 L885.7 387.0 L882.3 421.0 M863.0 357.0 L862.3 367.0 L877.0 369.0 L878.3 359.7 M877.0 369.0 L875.0 386.3 M888.3 355.0 L885.7 387.0 M715.0 437.7 L767.7 425.7 L808.3 422.3 L848.3 423.7 L898.3 428.3 M774.3 455.0 L775.0 447.0 L807.0 443.0 L806.3 437.0 M823.7 437.0 L825.7 448.3 L831.0 453.7 M832.3 437.0 L831.0 448.3 M836.3 448.3 L898.3 450.3 M839.0 437.7 L837.7 449.0 M376.3 450.0 L376.3 451.3 L397.0 453.3 M405.7 462.0 L421.7 462.7 L421.0 466.0 L487.0 470.0 L489.0 484.0 M442.3 467.3 L440.3 493.3 L403.7 491.3 L405.0 462.7 M332.3 487.3 L385.7 496.7 M332.3 499.3 L387.7 508.7 L421.0 519.3 L431.7 527.3 L439.0 535.3 L445.7 550.0 M405.0 492.7 L405.0 498.0 L429.0 510.7 M426.3 503.3 L441.0 503.3 L443.0 507.3 L439.7 510.0 L429.0 510.7 L425.0 507.3 L426.3 503.3 M442.3 508.7 L458.3 499.3 L525.0 481.3 M525.0 505.3 L521.7 531.3 M525.0 535.3 L521.0 535.3 L519.0 544.7 L525.0 545.3 M525.3 481.3 L578.7 469.3 L661.3 450.0 M544.0 492.0 L548.7 507.3 M524.0 505.3 L552.7 508.7 L553.3 504.0 L560.7 504.7 L560.0 509.3 L571.3 506.0 L570.0 524.0 L559.3 523.3 L557.3 535.3 L522.0 530.7 L524.0 505.3 M559.3 527.3 L578.7 530.0 M521.3 536.0 L535.3 536.7 L534.0 546.0 L520.0 545.3 M583.3 488.7 L701.3 501.3 L720.0 502.7 M592.0 500.7 L607.3 502.7 L606.7 511.3 L622.0 513.3 L633.3 514.7 L632.0 526.0 L628.0 526.7 L626.7 538.7 L600.7 535.3 L601.3 520.7 L590.0 519.3 L592.0 500.7 M607.3 502.7 L620.7 504.0 L619.3 512.7 M612.0 492.7 L610.7 502.0 M626.0 494.0 L622.7 512.7 M642.0 500.7 L666.7 503.3 L665.3 518.0 L673.3 518.7 L672.7 524.7 L698.7 527.3 M654.7 522.7 L652.7 542.0 L664.7 543.3 L665.3 541.3 L669.3 542.0 L668.7 550.0 M654.7 522.7 L665.3 523.3 M682.7 526.0 L680.0 550.0 M720.0 465.3 L711.3 464.7 L709.3 483.3 L713.3 484.0 L712.7 486.0 L720.0 486.7 M702.7 506.0 L701.3 527.3 L720.0 529.3 M720.0 513.3 L716.0 514.0 L714.7 528.7 M720.0 544.7 L708.0 543.3 L709.3 528.7 M720.3 452.7 L723.0 456.7 L721.7 462.7 L743.0 464.0 L743.7 459.3 L773.7 461.3 L775.0 451.3 L800.3 453.3 L794.3 480.7 L792.3 490.0 L747.0 486.7 L745.7 489.3 L720.3 486.0 M759.7 461.3 L755.7 487.3 M814.3 450.0 L815.7 456.0 L821.7 459.3 L829.7 461.3 M824.3 450.0 L828.3 452.7 L831.0 453.3 L829.7 461.3 M838.3 450.0 L867.0 454.7 L862.3 483.3 L846.3 480.0 L845.7 478.0 L827.0 474.0 L829.7 461.3 M720.3 504.7 L761.7 508.7 L824.3 516.0 L823.0 545.3 M720.3 514.0 L747.0 516.0 L746.3 519.3 L757.7 521.3 L755.0 536.7 L724.3 533.3 L723.0 543.3 L720.3 543.1 M739.0 515.3 L739.7 518.7 L745.7 519.3 M747.0 511.3 L759.7 512.7 M772.3 514.0 L776.3 520.0 L799.0 522.7 L799.7 525.3 L815.0 527.3 L813.7 543.3 L793.7 542.0 L792.3 550.0 M776.3 520.0 L773.7 534.0 L769.0 550.0 M799.0 522.7 L807.0 523.3 L806.3 526.0 M876.3 530.0 L836.3 525.3 L833.7 546.0 L821.7 544.7 M835.0 532.0 L827.0 532.7 L825.0 545.3 M861.7 530.0 L862.3 532.0 L867.0 532.0 L867.7 530.0 M882.3 505.3 L898.3 506.7 M898.3 482.0 L893.7 486.0 L897.7 490.7 M898.3 511.3 L892.3 516.7 L898.3 524.0 M878.3 546.0 L898.3 548.7 M855.0 550.0 L868.3 548.7 M377.7 618.3 L380.3 603.0 L411.7 571.7 L447.7 568.3 L455.7 561.0 M411.7 571.7 L408.3 592.3 L406.3 618.3 M408.3 592.3 L411.7 589.7 L444.3 595.7 L441.0 617.7 L446.3 618.3 M411.7 592.3 L439.7 597.7 L435.7 617.0 L445.0 618.3 M407.7 612.3 L425.0 615.0 L425.7 618.3 M469.0 582.3 L461.0 581.0 L453.0 587.7 L449.7 597.0 L445.7 618.3 M525.0 579.7 L498.3 578.3 L493.0 582.3 L491.7 591.0 M520.0 579.7 L720.0 592.3 M574.7 591.7 L584.0 592.3 L588.7 598.3 L584.7 602.3 L583.3 617.7 L573.3 617.7 L571.3 614.3 L573.3 593.0 L574.7 591.7 M690.7 606.3 L640.7 603.0 L640.0 599.7 L629.3 598.3 L629.3 592.3 L595.3 590.3 L594.0 605.0 L588.7 605.7 L587.3 617.7 L608.7 618.3 M634.0 587.7 L640.0 597.0 L673.3 598.3 L672.7 618.3 M667.3 605.7 L666.0 618.3 M668.0 545.0 L668.0 554.3 L680.0 555.7 L680.7 545.0 M698.7 596.3 L705.3 596.3 L708.7 601.0 L708.7 611.7 L704.7 615.0 L699.3 614.3 L696.7 610.3 L698.0 598.3 L698.7 596.3 M720.3 592.7 L744.3 594.3 L761.0 597.7 L759.7 618.3 M744.3 594.3 L743.7 604.3 L759.7 606.3 M733.0 604.3 L727.7 618.3 M728.3 611.7 L724.3 618.3 M780.3 589.0 L777.0 618.3 M757.0 552.3 L777.7 554.3 L777.7 551.0 L792.3 552.3 L793.7 545.0 M768.3 545.0 L767.7 553.0 M829.7 545.0 L831.7 547.0 L830.3 555.7 L840.3 557.0 L841.0 552.3 L854.3 553.7 L855.7 548.3 L868.3 549.7 L867.7 557.0 L875.7 558.3 M868.3 549.7 L875.0 549.7 M878.3 545.0 L898.3 548.3 M898.3 561.0 L897.7 563.0 L894.3 560.3 L885.0 567.7 L897.0 581.0 M805.0 579.0 L812.3 580.3 L811.7 589.0 L804.3 588.3 L805.0 579.0 M884.3 617.7 L898.3 618.3" stroke="#d0d0d0" stroke-width="0.9"/><path d="M372.2 269.7 L369.4 294.0 L449.4 302.0 M467.2 269.7 L416.2 362.0 M475.0 316.5 L455.3 315.9 L449.4 321.2 L428.1 362.0 M485.3 269.3 L479.1 315.3 M470.0 316.0 L664.0 337.3 M664.7 329.3 L661.3 362.0 M634.0 269.3 L628.0 334.0 M665.0 330.0 L767.7 340.7 L764.3 362.0 M785.7 269.3 L774.3 362.0 M843.0 269.3 L834.3 335.3 L865.0 340.0 M849.7 270.0 L865.0 272.0 M843.0 335.3 L841.0 362.0 M850.0 270.0 L897.3 275.3 L894.7 285.3 L888.7 344.0 M897.3 279.3 L894.7 282.7 M834.7 334.7 L897.3 345.3 M898.0 338.0 L896.0 362.0 M332.3 390.3 L403.7 399.0 M393.0 397.7 L392.3 411.7 L403.0 412.3 L403.7 399.0 M419.7 355.0 L411.7 369.7 L405.0 397.7 L401.7 424.3 L397.7 455.0 M431.7 355.0 L421.7 372.3 L413.7 405.7 L410.3 429.7 L407.7 455.0 M410.3 431.0 L525.0 443.7 M662.0 355.0 L651.3 445.7 M525.3 443.3 L617.3 454.3 L651.3 446.3 L720.0 429.7 M702.7 455.0 L720.0 449.7 M775.7 355.0 L767.7 420.3 M765.7 355.0 L757.7 421.7 M715.0 431.7 L757.7 421.7 L808.3 415.7 L848.3 417.7 L898.3 422.3 M715.0 451.0 L768.3 440.3 L810.3 435.7 L848.3 438.3 L898.3 443.0 M840.3 355.0 L835.7 417.0 M897.0 355.0 L890.3 421.7 M810.3 435.7 L808.3 455.0 M887.7 442.3 L886.3 455.0 M332.3 489.3 L385.7 496.7 L394.3 488.7 L397.7 450.0 M407.7 450.0 L404.3 494.0 L407.7 498.7 L439.7 498.0 L465.0 489.3 L525.0 475.3 M332.3 500.0 L405.0 515.3 L426.3 530.0 L444.3 550.0 M420.3 498.7 L463.0 550.0 M400.3 515.3 L401.0 550.0 M525.0 496.0 L477.0 507.3 L467.7 510.7 L460.3 516.7 L456.3 523.3 L455.0 530.0 L457.0 538.0 L463.7 550.0 M520.0 477.3 L578.7 462.0 L636.0 450.0 M578.7 450.0 L613.3 453.3 M720.0 451.3 L612.0 476.0 L607.3 478.7 L608.7 482.7 L720.0 494.7 M520.0 497.3 L564.7 486.7 L584.0 489.3 L584.0 482.0 L591.3 480.7 L608.7 482.7 M584.0 482.0 L577.3 550.0 M642.7 486.0 L636.7 550.0 M702.7 492.7 L696.7 550.0 M715.0 494.7 L803.7 504.0 L880.3 512.0 M809.0 450.0 L803.7 504.0 M761.7 499.3 L756.3 550.0 M821.7 505.3 L817.7 550.0 M887.0 450.0 L880.3 512.0 L875.7 550.0 M878.3 522.0 L898.3 524.0 M401.0 545.0 L402.1 618.3 M441.7 545.0 L494.3 618.3 M461.0 545.0 L511.7 618.3 M476.3 568.3 L525.0 571.0 M520.0 571.0 L720.0 585.0 M578.0 545.0 L574.9 575.0 M637.3 545.0 L633.3 578.3 M698.0 545.0 L690.0 619.0 M757.7 545.0 L753.0 587.0 M715.0 583.7 L786.3 588.3 L871.7 595.0 M817.7 545.0 L813.0 590.3 M786.3 588.3 L782.3 618.3 M876.3 545.0 L869.0 618.3 M872.3 579.0 L898.3 581.0" stroke="#00c4d4" stroke-width="1"/><circle cx="602.7" cy="287" r="5.6" stroke="#d4d4d4" stroke-width="1"/><circle cx="767.6" cy="426" r="1.4" stroke="#d8d8d8" stroke-width="0.8"/><circle cx="894" cy="428.1" r="1.4" stroke="#d8d8d8" stroke-width="0.8"/><circle cx="453" cy="314.1" r="1.4" stroke="#d8d8d8" stroke-width="0.8"/><circle cx="578.7" cy="469.3" r="1.4" stroke="#d8d8d8" stroke-width="0.8"/><circle cx="389.7" cy="507.6" r="1.4" stroke="#d8d8d8" stroke-width="0.8"/></g><text x="718.3" y="298.7" font-family="Liberation Sans" font-size="8.6" fill="#d8d800">445</text><text x="642" y="350.7" font-family="Liberation Sans" font-size="8.6" fill="#d8d800">548</text><text x="707.7" y="358.7" font-family="Liberation Sans" font-size="8.6" fill="#d8d800">1931</text><text x="841.7" y="326.7" font-family="Liberation Sans" font-size="8.6" fill="#d8d800">2360</text><text x="390.3" y="409" font-family="Liberation Sans" font-size="8.6" fill="#d8d800">1580</text><text x="855" y="408.3" font-family="Liberation Sans" font-size="8.6" fill="#d8d800">1614</text><text x="349" y="464" font-family="Liberation Sans" font-size="8.6" fill="#d8d800">2546</text><text x="449" y="458.7" font-family="Liberation Sans" font-size="8.6" fill="#d8d800">1549</text><text x="664" y="479.3" font-family="Liberation Sans" font-size="8.6" fill="#d8d800">1612</text><text x="836.3" y="496.7" font-family="Liberation Sans" font-size="8.6" fill="#d8d800">1810</text><text x="881.7" y="500" font-family="Liberation Sans" font-size="8.6" fill="#d8d800">2506</text><text x="489" y="544" font-family="Liberation Sans" font-size="8.6" fill="#d8d800">1703</text><text x="599.3" y="559.7" font-family="Liberation Sans" font-size="8.6" fill="#d8d800">1705</text><text x="655.3" y="569" font-family="Liberation Sans" font-size="8.6" fill="#d8d800">1706</text><text x="719.7" y="567.7" font-family="Liberation Sans" font-size="8.6" fill="#d8d800">1707</text><text x="775.7" y="574.3" font-family="Liberation Sans" font-size="8.6" fill="#d8d800">1708</text><text x="835.7" y="577" font-family="Liberation Sans" font-size="8.6" fill="#d8d800">552</text><text x="877" y="559" font-family="Liberation Sans" font-size="8.6" fill="#d8d800">550</text><text x="550" y="609" font-family="Liberation Sans" font-size="8.6" fill="#d8d800">555</text><text x="465" y="617" font-family="Liberation Sans" font-size="8.6" fill="#d8d800">1953</text><text x="455.9" y="320" font-family="Liberation Sans" font-size="8.6" fill="#e0780c">52563284</text><text x="773" y="431" font-family="Liberation Sans" font-size="8.6" fill="#e0780c">52563693</text><text x="852.3" y="432.3" font-family="Liberation Sans" font-size="8.6" fill="#e0780c">52563694</text><text x="580.7" y="463.3" font-family="Liberation Sans" font-size="8.6" fill="#e0780c">52563692</text><text x="385.7" y="516" font-family="Liberation Sans" font-size="8.6" fill="#e0780c">52563236</text><text transform="translate(626.7 467.3) rotate(-16)" font-family="Liberation Sans" font-size="8.6" fill="#d8d800">43505</text><text transform="translate(399 429.5) rotate(90)" font-family="Liberation Sans" font-size="8.6" fill="#d8d800">43506</text><text transform="translate(422 364) rotate(-60)" font-family="Liberation Sans" font-size="9.6" fill="#b4b4b4">Exercitation</text><text transform="translate(674 456.5) rotate(-17)" font-family="Liberation Sans" font-size="9.6" fill="#b4b4b4">Magna Aliqua</text><text transform="translate(703.5 501.5) rotate(7)" font-family="Liberation Sans" font-size="9.6" fill="#b4b4b4">Laboris Nisi</text><text transform="translate(472.5 578.5) rotate(55)" font-family="Liberation Sans" font-size="9.6" fill="#b4b4b4">Minim Veniam</text></svg><div class="a" style="left:95px;top:732px;width:1058px;height:14px;background:#f7f7f7"></div><div class="a" style="left:215px;top:736px;width:748px;height:8px;background:#7f7f7f;border-radius:4px"></div><div class="a" style="left:1139px;top:170px;width:14px;height:562px;background:#f7f7f7;border-right:2px solid #e0e0e0"></div><div class="a" style="left:1143px;top:318px;width:8px;height:267px;background:#7f7f7f;border-radius:4px"></div><div class="a" style="left:1083px;top:732px;width:70px;height:14px;background:#ececec"></div><div class="a" style="left:1060px;top:732px;width:93px;font-size:13px;line-height:16px;text-align:right;color:#111">10 &lt; 100</div><div class="a" style="left:72px;top:746px;width:1081px;height:3px;background:#c8c8c8"></div><div class="a" style="left:72px;top:749px;width:1081px;height:21px;background:#fff;border-bottom:1px solid #c8c8c8"></div><div class="a" style="left:77px;top:750px;font-size:13.3px;font-style:italic;color:#1a1ad8;line-height:17px">Comando: gf</div><div class="a" style="left:72px;top:777px;font-size:13.4px;color:#111;line-height:17px">Comando:</div><div class="a" style="left:138px;top:776px;width:989px;height:18px;background:#fff"></div><div class="a" style="left:1138px;top:750px;width:15px;height:20px;background:#f8f8f8;border-left:1px solid #ececec"></div><div class="a" style="left:1142.5px;top:750px;width:8px;height:17px;background:#7f7f7f;border-radius:4px"></div><div class="a" style="left:1127.5px;top:772.8px;width:25.5px;height:24.6px;background:linear-gradient(#f4f4f4,#ececec);border:1px solid #c4c4c4"></div><svg width="1500" height="844" style="position:absolute;left:0;top:0"><rect x="1133.5" y="780.5" width="13" height="8.5" fill="#fff" stroke="#111" stroke-width="1"/><rect x="1133" y="780" width="14" height="2.5" fill="#111"/></svg><div class="a" style="left:0;top:798px;width:1500px;height:46px;background:#dcdcdc"></div><div class="a" style="left:1154px;top:122px;width:301px;height:676px;background:#ececec"></div><div class="a" style="left:1155px;top:170px;width:299px;height:388px;background:#fff;border:1px solid #c8c8c8;border-top:none"></div><div class="a" style="left:1455px;top:122px;width:45px;height:676px;background:linear-gradient(90deg,#eeeeee,#cfcfcf);border-left:1px solid #f8f8f8"></div><svg width="80" height="844" style="position:absolute;left:0;top:0"><defs><linearGradient id="tbg" x1="0" y1="0" x2="0" y2="1"><stop offset="0" stop-color="#e2e2e2"/><stop offset="0.3" stop-color="#f2f2f2"/><stop offset="1" stop-color="#f6f6f6"/></linearGradient></defs><rect x="7" y="131" width="2" height="2" fill="#9a9a9a"/><rect x="13" y="131" width="2" height="2" fill="#9a9a9a"/><rect x="19" y="131" width="2" height="2" fill="#9a9a9a"/><rect x="25" y="131" width="2" height="2" fill="#9a9a9a"/><rect x="31" y="131" width="2" height="2" fill="#9a9a9a"/><rect x="37" y="131" width="2" height="2" fill="#9a9a9a"/><rect x="43" y="131" width="2" height="2" fill="#9a9a9a"/><rect x="49" y="131" width="2" height="2" fill="#9a9a9a"/><rect x="55" y="131" width="2" height="2" fill="#9a9a9a"/><rect x="61" y="131" width="2" height="2" fill="#9a9a9a"/><rect x="1.95" y="137.85" width="33.2" height="33.2" fill="url(#tbg)" stroke="#8e8e8e" stroke-width="1.3"/><rect x="37.15" y="137.85" width="33.2" height="33.2" fill="url(#tbg)" stroke="#8e8e8e" stroke-width="1.3"/><rect x="1.95" y="172.65" width="33.2" height="33.2" fill="url(#tbg)" stroke="#8e8e8e" stroke-width="1.3"/><rect x="37.15" y="172.65" width="33.2" height="33.2" fill="url(#tbg)" stroke="#8e8e8e" stroke-width="1.3"/><rect x="1.95" y="207.35" width="33.2" height="33.2" fill="url(#tbg)" stroke="#8e8e8e" stroke-width="1.3"/><rect x="37.15" y="207.35" width="33.2" height="33.2" fill="url(#tbg)" stroke="#8e8e8e" stroke-width="1.3"/><rect x="1.95" y="242.35" width="33.2" height="33.2" fill="url(#tbg)" stroke="#8e8e8e" stroke-width="1.3"/><rect x="37.15" y="242.35" width="33.2" height="33.2" fill="url(#tbg)" stroke="#8e8e8e" stroke-width="1.3"/><rect x="1.95" y="277.25" width="33.2" height="33.2" fill="url(#tbg)" stroke="#8e8e8e" stroke-width="1.3"/><rect x="1.95" y="321.05" width="33.2" height="33.2" fill="url(#tbg)" stroke="#8e8e8e" stroke-width="1.3"/><rect x="37.15" y="321.05" width="33.2" height="33.2" fill="url(#tbg)" stroke="#8e8e8e" stroke-width="1.3"/><rect x="1.95" y="355.25" width="33.2" height="33.2" fill="url(#tbg)" stroke="#8e8e8e" stroke-width="1.3"/><rect x="1.95" y="399.15" width="33.2" height="33.2" fill="url(#tbg)" stroke="#8e8e8e" stroke-width="1.3"/><rect x="37.15" y="399.15" width="33.2" height="33.2" fill="url(#tbg)" stroke="#8e8e8e" stroke-width="1.3"/><rect x="1.95" y="432.95" width="33.2" height="33.2" fill="url(#tbg)" stroke="#8e8e8e" stroke-width="1.3"/><rect x="37.15" y="432.95" width="33.2" height="33.2" fill="url(#tbg)" stroke="#8e8e8e" stroke-width="1.3"/><rect x="1.95" y="476.95" width="33.2" height="33.2" fill="url(#tbg)" stroke="#8e8e8e" stroke-width="1.3"/><path d="M31.5 167.0 L31.5 162.7 L27.3 167.0 Z" fill="#000"/><path d="M66.7 167.0 L66.7 162.7 L62.5 167.0 Z" fill="#000"/><path d="M31.5 201.8 L31.5 197.5 L27.3 201.8 Z" fill="#000"/><path d="M66.7 201.8 L66.7 197.5 L62.5 201.8 Z" fill="#000"/><path d="M31.5 236.5 L31.5 232.2 L27.3 236.5 Z" fill="#000"/><path d="M66.7 236.5 L66.7 232.2 L62.5 236.5 Z" fill="#000"/><path d="M31.5 271.5 L31.5 267.2 L27.3 271.5 Z" fill="#000"/><path d="M66.7 271.5 L66.7 267.2 L62.5 271.5 Z" fill="#000"/><path d="M31.5 306.4 L31.5 302.1 L27.3 306.4 Z" fill="#000"/><path d="M66.7 350.2 L66.7 345.9 L62.5 350.2 Z" fill="#000"/><path d="M31.5 428.3 L31.5 424.0 L27.3 428.3 Z" fill="#000"/><path d="M66.7 462.1 L66.7 457.8 L62.5 462.1 Z" fill="#000"/><path d="M31.5 506.1 L31.5 501.8 L27.3 506.1 Z" fill="#000"/><path d="M8.3 146.8 h6.4 M11.5 143.60000000000002 v6.4" stroke="#111" stroke-width="1.2"/><path d="M22.3 155.5 h6.4 M25.5 152.3 v6.4" stroke="#111" stroke-width="1.2"/><path d="M9.100000000000001 161.8 h6.4 M12.3 158.60000000000002 v6.4" stroke="#111" stroke-width="1.2"/><line x1="41.5" y1="160" x2="65" y2="149" stroke="#222" stroke-width="1.2"/><path d="M7.8 198 A20.5 20.5 0 0 1 27.5 178.4" fill="none" stroke="#2a2a2a" stroke-width="1.1" stroke-width="1.3"/><circle cx="52.5" cy="188.3" r="10" fill="none" stroke="#2a2a2a" stroke-width="1.1" stroke-width="1.3"/><ellipse cx="18.3" cy="223.6" rx="13" ry="6.2" transform="rotate(-43 18.3 223.6)" fill="none" stroke="#2a2a2a" stroke-width="1.1" stroke-width="1.3"/><path d="M42 216.5 C44 213 52 219 56 223 C60 227 64 228 64 225 C64 221 62 214 60 215 C57 216 54 225 50 232 C47 236 44 230 42 216.5 Z" fill="none" stroke="#2a2a2a" stroke-width="1.1" stroke-width="1.3"/><path d="M13.6 254.4 C9 255.5 8 262 13 262.8 L27.6 262.8" fill="none" stroke="#2a2a2a" stroke-width="1.1" stroke-width="1.3"/><path d="M43.5 247.6 L51.5 247.6 L54.8 253.3 L51.5 259 L43.5 259 L40.2 253.3 Z" fill="none" stroke="#2a2a2a" stroke-width="1.1"/><path d="M60.7 251.3 L66 260.5 L55.3 260.5 Z" fill="none" stroke="#2a2a2a" stroke-width="1.1"/><rect x="41.2" y="263.4" width="14.2" height="7.2" fill="none" stroke="#2a2a2a" stroke-width="1.1"/><defs><pattern id="hp" width="3" height="3" patternUnits="userSpaceOnUse" patternTransform="rotate(45)"><line x1="0" y1="0" x2="0" y2="3" stroke="#888" stroke-width="1"/></pattern></defs><path d="M7.5 301.3 L7.5 294.3 L12 287.5 L29.3 287.5 L29.3 301.3 Z" fill="url(#hp)" stroke="#333" stroke-width="1"/><circle cx="21" cy="294.3" r="3" fill="#f0f0f0" stroke="#333" stroke-width="1"/><text x="18" y="346.5" font-family="Liberation Serif" font-size="27" fill="#111" text-anchor="middle">A</text><path d="M43.5 330 v13 M62 330 v13 M44 331.3 h17.5" stroke="#222" stroke-width="1.3" fill="none"/><path d="M44 331.3 l3.5 -1.8 v3.6 Z M61.5 331.3 l-3.5 -1.8 v3.6 Z" fill="#222"/><rect x="7.2" y="363.8" width="21.5" height="16" fill="#fff" stroke="#111" stroke-width="1.3"/><path d="M9.5 377.5 L13.5 372 L16.5 374.5 L21 369.5 L26 377.5 Z" fill="#000"/><circle cx="24.3" cy="367.3" r="1.6" fill="#000"/><path d="M5.5 427.8 L5.5 408.3 L24.6 427.8 Z M9.5 423.8 L9.5 418.5 L14.8 423.8 Z" fill="#fff" fill-rule="evenodd" stroke="#111" stroke-width="1.2"/><path d="M10.3 405.3 L12.8 402.8 L19.3 409.3 L20.2 412.8 L16.8 411.8 Z" fill="#e02020" stroke="#701010" stroke-width="0.7"/><path d="M19.3 409.3 L20.2 412.8 L16.8 411.8 Z" fill="#e8c090"/><path d="M10.3 405.3 L12.8 402.8 L11.8 402 L9.5 404.3 Z" fill="#f0a0a0"/><path d="M26.3 402 L23.4 419 M26.3 402 L29.3 419" stroke="#111" stroke-width="1.2"/><circle cx="26.3" cy="403" r="1.2" fill="#111"/><rect x="41.2" y="410.8" width="23.4" height="8" rx="1.5" fill="#fafafa" stroke="#333" stroke-width="1"/><path d="M44 411 v2.2 M46.5 411 v1.5 M49 411 v2.2 M51.5 411 v1.5 M54 411 v2.2 M56.5 411 v1.5 M59 411 v2.2 M61.5 411 v1.5" stroke="#333" stroke-width="0.7"/><rect x="7.6" y="440.3" width="16.8" height="12.7" fill="#f0ecd6" stroke="#9a9a9a" stroke-width="1"/><circle cx="21.8" cy="452.2" r="7" fill="#f0ecd6" fill-opacity="0.85" stroke="#9a9a9a" stroke-width="1"/><path d="M7.6 440.3 L24.4 440.3 L24.4 453" fill="none" stroke="#9a9a9a" stroke-width="1"/><circle cx="7.8" cy="453" r="1.3" fill="#f06060"/><line x1="41.5" y1="448.8" x2="59" y2="438.8" stroke="#f02020" stroke-width="1.3"/><path d="M51.5 443.5 L51.5 456 L54.2 453.6 L56.3 458 L58.3 457 L56.2 452.8 L59.8 452.5 Z" fill="#fff" stroke="#555" stroke-width="0.8" stroke-linejoin="round"/><path d="M7.5 489.5 L20 482.5 L28.5 487.3 L28.5 497.7 L16 504.5 L7.5 499.7 Z M7.5 489.5 L16 494.3 L28.5 487.3 M16 494.3 L16 504.5" fill="none" stroke="#222" stroke-width="1.2" stroke-linejoin="round"/></svg><svg width="1500" height="844" style="position:absolute;left:0;top:0"><defs><linearGradient id="lbtn" x1="0" y1="0" x2="0" y2="1"><stop offset="0" stop-color="#e6e6e6"/><stop offset="0.35" stop-color="#f4f4f4"/><stop offset="1" stop-color="#f2f2f2"/></linearGradient><radialGradient id="ring"><stop offset="0.78" stop-color="#a8bcd0" stop-opacity="0"/><stop offset="0.86" stop-color="#a8bcd0" stop-opacity="0.55"/><stop offset="0.93" stop-color="#9db3c9" stop-opacity="0.85"/><stop offset="1" stop-color="#a8bcd0" stop-opacity="0.0"/></radialGradient><linearGradient id="cbtn" x1="0" y1="0" x2="0" y2="1"><stop offset="0" stop-color="#3d95f8"/><stop offset="1" stop-color="#0a6ff0"/></linearGradient><linearGradient id="fbtn" x1="0" y1="0" x2="0" y2="1"><stop offset="0" stop-color="#e8e8e8"/><stop offset="0.4" stop-color="#f6f6f6"/><stop offset="1" stop-color="#f0f0f0"/></linearGradient></defs><circle cx="1164" cy="133" r="6.9" fill="#6a6a6a"/><path d="M1161 130 L1167 136 M1167 130 L1161 136" stroke="#fff" stroke-width="1.7"/><circle cx="1182" cy="133" r="6.9" fill="#6a6a6a"/><rect x="1180.2" y="129.2" width="5" height="4" fill="none" stroke="#fff" stroke-width="1"/><rect x="1178.3" y="131.4" width="5" height="4.2" fill="#6a6a6a" stroke="#fff" stroke-width="1"/><text x="1322" y="137.8" font-family=""Liberation Sans", sans-serif" font-size="11.8" fill="#262626" text-anchor="middle">Lista de capas</text><rect x="1155" y="143" width="299" height="1.5" fill="#d8d8d8"/><rect x="1155.5" y="145.5" width="298.5" height="25.5" fill="url(#lbtn)" stroke="#a8a8a8" stroke-width="1.2"/><rect x="1214.4" y="145.5" width="1.2" height="25.5" fill="#a8a8a8"/><rect x="1274.4" y="145.5" width="1.2" height="25.5" fill="#a8a8a8"/><rect x="1334.4" y="145.5" width="1.2" height="25.5" fill="#a8a8a8"/><rect x="1394.4" y="145.5" width="1.2" height="25.5" fill="#a8a8a8"/><rect x="1155" y="170.2" width="299" height="1.5" fill="#a8a8a8"/><path d="M1177.5 158.0 Q1179 151.39999999999998 1185 151.39999999999998 Q1191 151.39999999999998 1192.5 158.0 Q1190 162.7 1185 162.7 Q1180 162.7 1177.5 158.0 Z" fill="#000"/><ellipse cx="1185" cy="158.1" rx="5.2" ry="3.4" fill="#fff"/><circle cx="1185" cy="157.39999999999998" r="2.6" fill="#000"/><path d="M1184.4 155.89999999999998 l0.9 1.2" stroke="#fff" stroke-width="0.6"/><path d="M1237.5 158.0 Q1239 151.39999999999998 1245 151.39999999999998 Q1251 151.39999999999998 1252.5 158.0 Q1250 162.7 1245 162.7 Q1240 162.7 1237.5 158.0 Z" fill="#9a9a9a"/><ellipse cx="1245" cy="158.1" rx="5.2" ry="3.4" fill="#fff"/><circle cx="1245" cy="157.39999999999998" r="2.6" fill="#9a9a9a"/><path d="M1244.4 155.89999999999998 l0.9 1.2" stroke="#fff" stroke-width="0.6"/><path d="M1299 158 h12 M1305 152 v12" stroke="#500" stroke-width="4.2"/><path d="M1299.5 158 h11 M1305 152.5 v11" stroke="#f00000" stroke-width="2.8"/><path d="M1359 158 h12" stroke="#500" stroke-width="4.2"/><path d="M1359.5 158 h11" stroke="#f00000" stroke-width="2.8"/><path d="M1418.0 164.5 L1422.0 163.7 L1431.7 154.3 L1428.7 151.2 L1419.0 160.5 Z" fill="#e8b040" stroke="#8a6020" stroke-width="0.6"/><path d="M1431.7 154.3 L1433.5 152.6 L1430.5 149.4 L1428.7 151.2 Z" fill="#e02020"/><path d="M1418.0 164.5 L1419.7 164.1 L1418.5 162.8 Z" fill="#333"/><rect x="1181.3" y="178.3" width="15.5" height="8.5" fill="#fff" stroke="#000" stroke-width="1.3"/><text x="1202.5" y="186.5" font-family=""Liberation Sans", sans-serif" font-size="12.5" fill="#111">0</text><path d="M1394.0 188.5 L1398.0 187.6 L1407.3 178.3 L1404.2 175.2 L1394.9 184.5 Z" fill="#e8b040" stroke="#8a6020" stroke-width="0.6"/><path d="M1407.3 178.3 L1409.1 176.6 L1405.9 173.4 L1404.2 175.2 Z" fill="#e02020"/><path d="M1394.0 188.5 L1395.7 188.1 L1394.4 186.8 Z" fill="#333"/><path d="M1415.5 182.4 Q1417 175.79999999999998 1423 175.79999999999998 Q1429 175.79999999999998 1430.5 182.4 Q1428 187.1 1423 187.1 Q1418 187.1 1415.5 182.4 Z" fill="#000"/><ellipse cx="1423" cy="182.5" rx="5.2" ry="3.4" fill="#fff"/><circle cx="1423" cy="181.79999999999998" r="2.6" fill="#000"/><path d="M1422.4 180.29999999999998 l0.9 1.2" stroke="#fff" stroke-width="0.6"/><path d="M1441.5 181 v-2.5 a3.5 3.5 0 0 1 7 0 v2.5" fill="none" stroke="#b8b8b8" stroke-width="1.4"/><rect x="1440" y="181" width="10.3" height="7.7" fill="#b8b8b8"/><circle cx="1313" cy="179.7" r="39.5" fill="url(#ring)"/><path d="M1313.3 180 L1313.3 202 L1318.2 197.6 L1322.2 206.6 L1325.6 205.1 L1321.6 196.3 L1328.4 195.6 Z" fill="#fff" stroke="#000" stroke-width="1.1" stroke-linejoin="round"/><circle cx="1164" cy="569.3" r="6.9" fill="#6a6a6a"/><path d="M1161 566.3 L1167 572.3 M1167 566.3 L1161 572.3" stroke="#fff" stroke-width="1.7"/><circle cx="1182" cy="569.3" r="6.9" fill="#6a6a6a"/><rect x="1180.2" y="565.5" width="5" height="4" fill="none" stroke="#fff" stroke-width="1"/><rect x="1178.3" y="567.6999999999999" width="5" height="4.2" fill="#6a6a6a" stroke="#fff" stroke-width="1"/><text x="1322" y="573.8" font-family=""Liberation Sans", sans-serif" font-size="12" fill="#262626" text-anchor="middle">Filtro de selección</text><rect x="1155" y="579" width="299" height="1.5" fill="#d4d4d4"/><rect x="1167.3" y="594.4" width="275.5" height="129" fill="#e4e4e4"/><rect x="1172" y="584" width="32" height="12" fill="#ececec"/><text x="1174" y="595" font-family=""Liberation Sans", sans-serif" font-size="12" fill="#1a1a1a">Filtro</text><text x="1182.4" y="630" font-family=""Liberation Sans", sans-serif" font-size="13.2" fill="#1a1a1a">Tipo:</text><rect x="1278.3" y="615.1" width="149" height="21" rx="5" fill="#fff" stroke="#d0d0d0" stroke-width="1"/><rect x="1409" y="616.7" width="16" height="17" rx="4" fill="url(#cbtn)"/><path d="M1414 623.8000000000001 L1417 620.8000000000001 L1420 623.8000000000001 M1414 626.8000000000001 L1417 629.8000000000001 L1420 626.8000000000001" fill="none" stroke="#fff" stroke-width="1.3"/><text x="1182.4" y="656" font-family=""Liberation Sans", sans-serif" font-size="13.2" fill="#1a1a1a">Característica:</text><rect x="1278.3" y="640.9" width="149" height="21" rx="5" fill="#fff" stroke="#d0d0d0" stroke-width="1"/><rect x="1409" y="642.5" width="16" height="17" rx="4" fill="url(#cbtn)"/><path d="M1414 649.6 L1417 646.6 L1420 649.6 M1414 652.6 L1417 655.6 L1420 652.6" fill="none" stroke="#fff" stroke-width="1.3"/><text x="1182.4" y="682" font-family=""Liberation Sans", sans-serif" font-size="13.2" fill="#1a1a1a">Comparación:</text><rect x="1278.3" y="666.9" width="149" height="21" rx="5" fill="#fff" stroke="#d0d0d0" stroke-width="1"/><rect x="1409" y="668.5" width="16" height="17" rx="4" fill="url(#cbtn)"/><path d="M1414 675.6 L1417 672.6 L1420 675.6 M1414 678.6 L1417 681.6 L1420 678.6" fill="none" stroke="#fff" stroke-width="1.3"/><text x="1182.4" y="705" font-family=""Liberation Sans", sans-serif" font-size="13.2" fill="#1a1a1a">Valor:</text><rect x="1167.8" y="739.5" width="274.5" height="24.5" fill="url(#fbtn)" stroke="#a4a4a4" stroke-width="1"/><rect x="1235.2" y="739.5" width="1" height="24.5" fill="#a4a4a4"/><rect x="1304.5" y="739.5" width="1" height="24.5" fill="#a4a4a4"/><rect x="1373.5" y="739.5" width="1" height="24.5" fill="#a4a4a4"/><rect x="1194" y="745.5" width="13" height="12" fill="#f88" stroke="#d33" stroke-width="0.8" stroke-dasharray="1.2 1"/><rect x="1262.5" y="745" width="10" height="10" fill="#f88" stroke="#a44" stroke-width="0.8"/><rect x="1266" y="748.5" width="10" height="10" fill="#f88" fill-opacity="0.9" stroke="#a44" stroke-width="0.8" stroke-dasharray="1.2 1"/><rect x="1332" y="745" width="10" height="10" fill="#f88" stroke="#a44" stroke-width="0.8"/><rect x="1335.5" y="748.5" width="10" height="10" fill="#fff" stroke="#555" stroke-width="0.8" stroke-dasharray="1.2 1"/><rect x="1335.5" y="748.5" width="6.5" height="6.5" fill="#fff"/><rect x="1400.5" y="745" width="10" height="10" fill="#fff" stroke="#555" stroke-width="0.8"/><rect x="1404" y="748.5" width="10" height="10" fill="none" stroke="#555" stroke-width="0.8" stroke-dasharray="1.2 1"/><rect x="1404" y="748.5" width="6.5" height="6.5" fill="#f88"/><rect x="1462" y="131" width="2" height="2" fill="#9a9a9a"/><rect x="1468" y="131" width="2" height="2" fill="#9a9a9a"/><rect x="1474" y="131" width="2" height="2" fill="#9a9a9a"/><rect x="1480" y="131" width="2" height="2" fill="#9a9a9a"/><rect x="1486" y="131" width="2" height="2" fill="#9a9a9a"/><rect x="1456.3" y="135" width="42.0" height="42.19999999999999" rx="6" fill="#b4b4b4"/><rect x="1456.2" y="329.8" width="42.09999999999991" height="42.599999999999966" rx="6" fill="#b4b4b4"/><rect x="1456.2" y="433.6" width="42.09999999999991" height="41.69999999999999" rx="6" fill="#b4b4b4"/><rect x="1463.3" y="142.8" width="27" height="27" fill="#fff" stroke="#111" stroke-width="1"/><rect x="1462.8" y="142.3" width="28" height="5" fill="#000"/><rect x="1464.3" y="143.3" width="3.5" height="3.2" fill="#fff"/><path d="M1469 162 L1474 159.5 L1474 150.5 L1469 153 Z" fill="#c8c8c8" stroke="#333" stroke-width="0.8"/><path d="M1472.5 162.5 L1484 157 L1484 147.8 L1472.5 153.3 Z" fill="#fff" stroke="#333" stroke-width="0.8"/><path d="M1476 159 L1480 151.5 L1481 157.5 Z" fill="none" stroke="#f04040" stroke-width="0.8"/><rect x="1463.3" y="189.7" width="27" height="27" fill="#fff" stroke="#111" stroke-width="1"/><rect x="1462.8" y="189.2" width="28" height="5" fill="#000"/><rect x="1464.3" y="190.2" width="3.5" height="3.2" fill="#fff"/><rect x="1467.5" y="198.5" width="11" height="8.5" fill="#f0ecc8" stroke="#888" stroke-width="0.8"/><circle cx="1479" cy="206" r="4.6" fill="#f0ecc8" stroke="#888" stroke-width="0.8"/><rect x="1463.3" y="235.6" width="27" height="27" fill="#fff" stroke="#111" stroke-width="1"/><rect x="1462.8" y="235.1" width="28" height="5" fill="#000"/><rect x="1464.3" y="236.1" width="3.5" height="3.2" fill="#fff"/><rect x="1467.5" y="244.5" width="17" height="11.5" rx="2" fill="#f4f4f4" stroke="#b0c4e0" stroke-width="0.8"/><line x1="1458" y1="276.5" x2="1499" y2="276.5" stroke="#777" stroke-width="0.9" stroke-dasharray="1 2"/><rect x="1463.3" y="291.6" width="27" height="27" fill="#fff" stroke="#111" stroke-width="1"/><rect x="1462.8" y="291.1" width="28" height="5" fill="#000"/><rect x="1464.3" y="292.1" width="3.5" height="3.2" fill="#fff"/><rect x="1466.5" y="298.5" width="4.2" height="3.2" fill="#000"/><rect x="1473" y="298.5" width="13.8" height="3.2" fill="#fff" stroke="#222" stroke-width="0.6"/><rect x="1466.5" y="304.5" width="4.2" height="3.2" fill="#000"/><rect x="1473" y="304.5" width="13.8" height="3.2" fill="#fff" stroke="#222" stroke-width="0.6"/><rect x="1466.5" y="310.5" width="4.2" height="3.2" fill="#000"/><rect x="1473" y="310.5" width="13.8" height="3.2" fill="#fff" stroke="#222" stroke-width="0.6"/><rect x="1463.3" y="337.4" width="27" height="27" fill="#fff" stroke="#111" stroke-width="1"/><rect x="1462.8" y="336.9" width="28" height="5" fill="#000"/><rect x="1464.3" y="337.9" width="3.5" height="3.2" fill="#fff"/><path d="M1469.5 347.3 Q1476.8 343.5 1484 347.3 L1478.5 354 L1478.5 361 L1475.5 359 L1475.2 354 Z" fill="#aaa" stroke="#333" stroke-width="0.6"/><ellipse cx="1476.8" cy="347.3" rx="7" ry="1.5" fill="#666"/><rect x="1463.3" y="384.5" width="27" height="27" fill="#fff" stroke="#111" stroke-width="1"/><rect x="1462.8" y="384" width="28" height="5" fill="#000"/><rect x="1464.3" y="385" width="3.5" height="3.2" fill="#fff"/><path d="M1468.5 391.5 L1473.5 396.5 L1473.5 403.3 L1468.5 408.3 Z" fill="#fff" stroke="#333" stroke-width="0.8"/><rect x="1473.5" y="396.5" width="9.5" height="7" rx="1.5" fill="#b0b0b0" stroke="#444" stroke-width="0.6"/><line x1="1467" y1="400" x2="1487" y2="400" stroke="#f08080" stroke-width="0.8" stroke-dasharray="1.5 1"/><line x1="1458" y1="425.4" x2="1499" y2="425.4" stroke="#777" stroke-width="0.9" stroke-dasharray="1 2"/><rect x="1463.3" y="440.8" width="27" height="27" fill="#fff" stroke="#111" stroke-width="1"/><rect x="1462.8" y="440.3" width="28" height="5" fill="#000"/><rect x="1464.3" y="441.3" width="3.5" height="3.2" fill="#fff"/><path d="M1465.5 449.5 h8 M1465.5 452.3 h7 M1465.5 455.1 h9 M1465.5 457.9 h9" stroke="#999" stroke-width="0.7"/><line x1="1463" y1="463" x2="1491" y2="463" stroke="#111" stroke-width="0.7"/><path d="M1466 465.5 h2 M1474 465.5 h12" stroke="#666" stroke-width="0.8"/><rect x="1463.3" y="487.4" width="27" height="27" fill="#fff" stroke="#111" stroke-width="1"/><rect x="1462.8" y="486.9" width="28" height="5" fill="#000"/><rect x="1464.3" y="487.9" width="3.5" height="3.2" fill="#fff"/><rect x="1470.5" y="494.5" width="13" height="15" rx="1" fill="#c98a20"/><rect x="1472" y="496" width="10" height="12" fill="#f6f6f6"/><rect x="1474" y="493.5" width="6" height="3" fill="#888"/><path d="M1473.5 499.5 h7 M1473.5 501.5 h7 M1473.5 503.5 h6" stroke="#bbb" stroke-width="0.6"/><line x1="1458" y1="528.3" x2="1499" y2="528.3" stroke="#777" stroke-width="0.9" stroke-dasharray="1 2"/><path d="M1465.5 550 L1475 550 L1470 556.5 Q1475.5 556.5 1475.5 560.5 Q1475.5 565 1470 565 L1464.5 565" fill="none" stroke="#111" stroke-width="1.9"/><path d="M1479.3 550 L1484.5 550 Q1490 550 1490 555 L1490 560 Q1490 565 1484.5 565 L1479.3 565 Z" fill="none" stroke="#111" stroke-width="1.9"/><text x="2.3" y="815.9" font-family=""Liberation Sans", sans-serif" font-size="9.6" fill="#1a1a1a" letter-spacing="0.5">400.795,235.6599</text><text x="2.3" y="836.2" font-family=""Liberation Sans", sans-serif" font-size="9.6" fill="#1a1a1a" letter-spacing="0.5">@400.795,235.6599</text><line x1="253.6" y1="802" x2="253.6" y2="842" stroke="#888" stroke-width="0.8"/><text x="256.2" y="815.9" font-family=""Liberation Sans", sans-serif" font-size="9.6" fill="#1a1a1a" letter-spacing="0.5">464.9432&lt;30°</text><text x="256.2" y="836.2" font-family=""Liberation Sans", sans-serif" font-size="9.6" fill="#1a1a1a" letter-spacing="0.5">@464.9432&lt;30°</text><circle cx="509.5" cy="822" r="2.5" fill="#c4c4c4"/><circle cx="1272" cy="822" r="2.5" fill="#c4c4c4"/><circle cx="942.5" cy="822" r="2.7" fill="#c4c4c4"/><text x="949.4" y="825.3" font-family=""Liberation Sans", sans-serif" font-size="9.6" fill="#1a1a1a" letter-spacing="0.15">No hay entidades seleccionadas.</text><rect x="717.5" y="806.3" width="17.5" height="29" rx="8.7" fill="#fff" stroke="#555" stroke-width="0.9"/><path d="M717.8 819.5 Q726.3 816.5 734.8 819.5" fill="none" stroke="#444" stroke-width="1.3"/><rect x="724.6" y="808.5" width="3.3" height="6.5" rx="1.6" fill="#fff" stroke="#444" stroke-width="0.9"/><line x1="726.3" y1="806.5" x2="726.3" y2="817.5" stroke="#444" stroke-width="0.5"/></svg><svg width="1500" height="130" style="position:absolute;left:0;top:0"><defs>
<radialGradient id="glow"><stop offset="0" stop-color="#ffffe8"/><stop offset="0.35" stop-color="#f4ec30"/><stop offset="0.75" stop-color="#eee23a" stop-opacity="0.8"/><stop offset="1" stop-color="#eee23a" stop-opacity="0"/></radialGradient>
<linearGradient id="lens" x1="0" y1="0" x2="0" y2="1"><stop offset="0" stop-color="#9cc0ee"/><stop offset="0.5" stop-color="#5e94dc"/><stop offset="1" stop-color="#82b0ea"/></linearGradient>
<linearGradient id="lensf" x1="0" y1="0" x2="0" y2="1"><stop offset="0" stop-color="#c4d6ee"/><stop offset="1" stop-color="#a8c4e8"/></linearGradient>
<linearGradient id="flop" x1="0" y1="0" x2="1" y2="0"><stop offset="0" stop-color="#8ab8f8"/><stop offset="0.5" stop-color="#4a8af0"/><stop offset="1" stop-color="#2f6ee8"/></linearGradient>
<linearGradient id="grn" x1="0" y1="0" x2="1" y2="1"><stop offset="0" stop-color="#8ad27a"/><stop offset="1" stop-color="#28a040"/></linearGradient>
</defs><rect x="6.8" y="47" width="2" height="2" fill="#8a8a8a"/><rect x="6.8" y="53" width="2" height="2" fill="#8a8a8a"/><rect x="6.8" y="59" width="2" height="2" fill="#8a8a8a"/><rect x="6.8" y="65" width="2" height="2" fill="#8a8a8a"/><rect x="6.8" y="71" width="2" height="2" fill="#8a8a8a"/><rect x="88.0" y="47" width="2" height="2" fill="#8a8a8a"/><rect x="88.0" y="53" width="2" height="2" fill="#8a8a8a"/><rect x="88.0" y="59" width="2" height="2" fill="#8a8a8a"/><rect x="88.0" y="65" width="2" height="2" fill="#8a8a8a"/><rect x="88.0" y="71" width="2" height="2" fill="#8a8a8a"/><rect x="402.7" y="47" width="2" height="2" fill="#8a8a8a"/><rect x="402.7" y="53" width="2" height="2" fill="#8a8a8a"/><rect x="402.7" y="59" width="2" height="2" fill="#8a8a8a"/><rect x="402.7" y="65" width="2" height="2" fill="#8a8a8a"/><rect x="402.7" y="71" width="2" height="2" fill="#8a8a8a"/><rect x="708.0" y="47" width="2" height="2" fill="#8a8a8a"/><rect x="708.0" y="53" width="2" height="2" fill="#8a8a8a"/><rect x="708.0" y="59" width="2" height="2" fill="#8a8a8a"/><rect x="708.0" y="65" width="2" height="2" fill="#8a8a8a"/><rect x="708.0" y="71" width="2" height="2" fill="#8a8a8a"/><line x1="187.5" y1="41" x2="187.5" y2="82" stroke="#555" stroke-width="1" stroke-dasharray="1 2"/><line x1="289.3" y1="41" x2="289.3" y2="82" stroke="#555" stroke-width="1" stroke-dasharray="1 2"/><line x1="345.3" y1="41" x2="345.3" y2="82" stroke="#555" stroke-width="1" stroke-dasharray="1 2"/><line x1="502.4" y1="41" x2="502.4" y2="82" stroke="#555" stroke-width="1" stroke-dasharray="1 2"/><line x1="558.7" y1="41" x2="558.7" y2="82" stroke="#555" stroke-width="1" stroke-dasharray="1 2"/><line x1="854.7" y1="41" x2="854.7" y2="82" stroke="#555" stroke-width="1" stroke-dasharray="1 2"/><line x1="911.6" y1="41" x2="911.6" y2="82" stroke="#555" stroke-width="1" stroke-dasharray="1 2"/><path d="M28 52 L28 68 L31.5 64.8 L34.5 71 L37 69.8 L34 63.6 L39 63.6 Z" fill="#fff" stroke="#222" stroke-width="1" stroke-linejoin="round"/><rect x="101.5" y="47.5" width="24" height="27" rx="1" fill="#f6f6f6" stroke="#7c7c7c" stroke-width="1"/><line x1="102" y1="75.5" x2="125" y2="75.5" stroke="#9a9a9a" stroke-width="1.5"/><circle cx="121.7" cy="52.7" r="7" fill="url(#glow)"/><path d="M145 50 L157 50 L157 72 L147 72 Z" fill="#8c8c8c" stroke="#666" stroke-width="0.8"/><path d="M151.5 47.5 L172.5 47.5 L171 58 L149 58 Z" fill="#f2f2f2" stroke="#777" stroke-width="0.8"/><line x1="154" y1="51" x2="168" y2="51" stroke="#b8b8b8" stroke-width="1.5"/><line x1="153" y1="54.5" x2="169" y2="54.5" stroke="#b8b8b8" stroke-width="1.5"/><path d="M147 72.5 L152 58.5 L176 58.5 L171 72.5 Z" fill="#6e9ed8" stroke="#4f7fc0" stroke-width="0.8"/><rect x="203.8" y="48.5" width="24" height="25" rx="3" fill="url(#flop)" stroke="#1a2aa0" stroke-width="1.2"/><rect x="207.3" y="49.5" width="17" height="11" fill="#f4f6ff"/><rect x="209.3" y="63.5" width="12" height="9.5" fill="#e2e2e8"/><rect x="210.8" y="65.5" width="2" height="4.5" fill="#1030d0"/><rect x="249.8" y="48.5" width="24" height="25" rx="3" fill="url(#flop)" stroke="#1a2aa0" stroke-width="1.2"/><rect x="253.3" y="49.5" width="17" height="11" fill="#f4f6ff"/><rect x="255.3" y="63.5" width="12" height="9.5" fill="#e2e2e8"/><rect x="256.8" y="65.5" width="2" height="4.5" fill="#1030d0"/><path d="M259.5 65.5 L272.5 50 L276.5 53.5 L263.5 69 L259 70.5 Z" fill="#f8b820" stroke="#a02818" stroke-width="0.9"/><path d="M272.5 50 L274 48.3 L278 51.8 L276.5 53.5 Z" fill="#e05040" stroke="#a02818" stroke-width="0.8"/><rect x="306" y="58.5" width="24.5" height="14.5" rx="3" fill="#000"/><path d="M318 60 L309.5 54 M318 60 L313 50.8 M318 60 L318 49.6 M318 60 L323 50.8 M318 60 L326.5 54" stroke="#000" stroke-width="4.6" stroke-linecap="round"/><path d="M318 60 L309.5 54 M318 60 L313 50.8 M318 60 L318 49.6 M318 60 L323 50.8 M318 60 L326.5 54" stroke="#f5a623" stroke-width="2.2" stroke-linecap="round"/><rect x="307.5" y="59.6" width="21.5" height="1.6" fill="#f5a623"/><text x="318.3" y="71.6" font-family="Liberation Sans" font-weight="bold" font-size="11" fill="#fff" text-anchor="middle" textLength="19" lengthAdjust="spacingAndGlyphs">SVG</text><rect x="365.5" y="47.5" width="18" height="14" rx="1" fill="#f2f2f2" stroke="#b8b8b8" stroke-width="1"/><rect x="360.5" y="58.5" width="27" height="14" rx="2.5" fill="#e6e6e6" stroke="#9c9c9c" stroke-width="1"/><rect x="361" y="66" width="26" height="6" rx="2" fill="#d2d2d2"/><path d="M361.5 73.5 Q374 75.5 386.5 73.5" stroke="#8c8c8c" stroke-width="1.4" fill="none"/><line x1="374.5" y1="60.5" x2="381" y2="67" stroke="#777" stroke-width="3" stroke-linecap="round"/><line x1="374.5" y1="60.5" x2="381" y2="67" stroke="#c8c8c8" stroke-width="1.4" stroke-linecap="round"/><circle cx="369.5" cy="55.5" r="6.6" fill="#f4f4f4" stroke="#c0c0c0" stroke-width="0.8"/><circle cx="369.5" cy="55.5" r="5.3" fill="url(#lensf)" stroke="#4a80d0" stroke-width="1"/><path d="M420.5 60.5 A9.2 9.2 0 1 1 427.5 72.5" fill="none" stroke="#0e7a28" stroke-width="5.2" stroke-linecap="butt"/><path d="M420.5 60.5 A9.2 9.2 0 1 1 427.5 72.5" fill="none" stroke="#4cb454" stroke-width="3"/><path d="M414.3 52.3 L414.3 66.7 L428 66.7 Z" fill="#6cc05c" stroke="#0e7a28" stroke-width="1"/><g opacity="0.5"><path d="M483.5 60.5 A9.2 9.2 0 1 0 476.5 72.5" fill="none" stroke="#0e7a28" stroke-width="5.2"/><path d="M483.5 60.5 A9.2 9.2 0 1 0 476.5 72.5" fill="none" stroke="#4cb454" stroke-width="3"/><path d="M489.7 52.3 L489.7 66.7 L476 66.7 Z" fill="#6cc05c" stroke="#0e7a28" stroke-width="1"/></g><g opacity="0.75"><ellipse cx="530" cy="72.5" rx="11" ry="1.5" fill="#c8c8c8"/><path d="M518.5 66.5 L537.5 48.5 L543.5 54 L524.5 72.5 Z" fill="#e88080" stroke="#b06060" stroke-width="0.6"/><path d="M524.5 68 L539 54.5 L541 56.5 L526.5 70 Z" fill="#fff" opacity="0.8"/><path d="M518.5 66.5 L522.5 62.5 L528.5 68.5 L524.5 72.5 Z" fill="#f2f2f2" stroke="#999" stroke-width="0.6"/></g><g opacity="0.75"><path d="M586 56 L588 46 L590.5 46 L589 62 Z" fill="#f4f4f4" stroke="#888" stroke-width="0.7"/><path d="M589 61 L600.5 53 L600.5 56 L592 61 Z" fill="#f4f4f4" stroke="#888" stroke-width="0.7"/><ellipse cx="579.5" cy="63" rx="5.5" ry="3.3" fill="none" stroke="#e07070" stroke-width="2"/><ellipse cx="589.5" cy="70" rx="3" ry="4.8" fill="none" stroke="#e07070" stroke-width="2"/><line x1="584" y1="62" x2="588" y2="63" stroke="#e07070" stroke-width="2"/></g><path d="M576 72.5 h7 M579.5 69 v7" stroke="#444" stroke-width="1.2"/><g opacity="0.75"><rect x="618.5" y="45.5" width="20" height="24" rx="1.5" fill="#f4f4f4" stroke="#bdbdbd" stroke-width="0.8"/><path d="M627 51.5 L647.5 51.5 L647.5 70 L642.5 76 L627 76 Z" fill="#f2f2f2" stroke="#b0b0b0" stroke-width="0.8"/><path d="M642.5 76 L642.5 71 L647.5 70 Z" fill="#bcbcbc"/><path d="M631 58.5 h13 M631 61 h12 M631 63.5 h11 M631 66.5 h12" stroke="#c4c4c4" stroke-width="0.9"/></g><path d="M619 72.5 h7 M622.5 69 v7" stroke="#444" stroke-width="1.2"/><rect x="666" y="48" width="26" height="27.5" rx="1.5" fill="#d08a1c" stroke="#a86c10" stroke-width="0.8"/><path d="M669 50 L689 50 L689 73 L669 73 Z" fill="#fbfbfb"/><path d="M685 68 L689 68 L689 73 L684 73 Z" fill="#9a9a9a"/><path d="M672 55.5 h14 M672 58.5 h13 M672 61 h12 M672 63.5 h14 M672 66.5 h9" stroke="#bdbdbd" stroke-width="0.9"/><rect x="672.5" y="45.3" width="13" height="7" rx="1.5" fill="#8a8a80" stroke="#6a6a60" stroke-width="0.7"/><line x1="723.3" y1="71.3" x2="744.7" y2="71.3" stroke="#ff2020" stroke-width="1.2"/><path d="M726 68.5 L739.5 51 L743.5 54 L730 71.3 L725 71 Z" fill="#e03018" stroke="#602010" stroke-width="0.9"/><path d="M739.5 51 L741 49.3 L745 52.3 L743.5 54 Z" fill="#f0a0a0" stroke="#602010" stroke-width="0.7"/><path d="M726 68.5 L730 71.3 L725 71.6 Z" fill="#f0d0b0"/><rect x="765.5" y="50.5" width="29" height="21.5" fill="#000080" stroke="#222" stroke-width="0.8"/><path d="M769.5 68.5 L791 54.5 L791 68.5 Z" fill="none" stroke="#e8e8ff" stroke-width="1.2" stroke-dasharray="2.2 1.3"/><circle cx="826" cy="61" r="13.5" fill="none" stroke="#000" stroke-width="2.2"/><line x1="812" y1="74.7" x2="840" y2="47" stroke="#1010ff" stroke-width="1.1"/><rect x="870" y="48" width="2.2" height="2.2" fill="#000"/><rect x="870" y="56" width="2.2" height="2.2" fill="#000"/><rect x="870" y="64" width="2.2" height="2.2" fill="#000"/><rect x="870" y="72" width="2.2" height="2.2" fill="#000"/><rect x="878" y="48" width="2.2" height="2.2" fill="#000"/><rect x="878" y="56" width="2.2" height="2.2" fill="#000"/><rect x="878" y="64" width="2.2" height="2.2" fill="#000"/><rect x="878" y="72" width="2.2" height="2.2" fill="#000"/><rect x="886" y="48" width="2.2" height="2.2" fill="#000"/><rect x="886" y="56" width="2.2" height="2.2" fill="#000"/><rect x="886" y="64" width="2.2" height="2.2" fill="#000"/><rect x="886" y="72" width="2.2" height="2.2" fill="#000"/><rect x="894" y="48" width="2.2" height="2.2" fill="#000"/><rect x="894" y="56" width="2.2" height="2.2" fill="#000"/><rect x="894" y="64" width="2.2" height="2.2" fill="#000"/><rect x="894" y="72" width="2.2" height="2.2" fill="#000"/><g><line x1="943" y1="64.5" x2="951" y2="72.5" stroke="#555" stroke-width="3.6" stroke-linecap="round"/><line x1="943" y1="64.5" x2="951" y2="72.5" stroke="#888" stroke-width="1.4" stroke-linecap="round"/><circle cx="936" cy="57.5" r="11" fill="#e8e8e0" stroke="#b8b8b0" stroke-width="1"/><circle cx="936" cy="57.5" r="9" fill="url(#lens)"/><path d="M931 57.5 h10 M936 52.5 v10" stroke="#fff" stroke-width="2.6"/></g><g><line x1="989" y1="64.5" x2="997" y2="72.5" stroke="#555" stroke-width="3.6" stroke-linecap="round"/><line x1="989" y1="64.5" x2="997" y2="72.5" stroke="#888" stroke-width="1.4" stroke-linecap="round"/><circle cx="982" cy="57.5" r="11" fill="#e8e8e0" stroke="#b8b8b0" stroke-width="1"/><circle cx="982" cy="57.5" r="9" fill="url(#lens)"/><path d="M976.5 57.5 h11" stroke="#fff" stroke-width="2.6"/></g><g><line x1="1035" y1="64.5" x2="1043" y2="72.5" stroke="#555" stroke-width="3.6" stroke-linecap="round"/><line x1="1035" y1="64.5" x2="1043" y2="72.5" stroke="#888" stroke-width="1.4" stroke-linecap="round"/><circle cx="1028" cy="57.5" r="11" fill="#e8e8e0" stroke="#b8b8b0" stroke-width="1"/><circle cx="1028" cy="57.5" r="9" fill="url(#lens)"/><path d="M1022.5 55.5 v-3.5 h3.5 M1030 52.0 h3.5 v3.5 M1033.5 59.5 v3.5 h-3.5 M1026 63.0 h-3.5 v-3.5" stroke="#fff" stroke-width="1.8" fill="none"/></g><g opacity="0.55"><line x1="1081" y1="64.5" x2="1089" y2="72.5" stroke="#555" stroke-width="3.6" stroke-linecap="round"/><line x1="1081" y1="64.5" x2="1089" y2="72.5" stroke="#888" stroke-width="1.4" stroke-linecap="round"/><circle cx="1074" cy="57.5" r="11" fill="#e8e8e0" stroke="#b8b8b0" stroke-width="1"/><circle cx="1074" cy="57.5" r="9" fill="url(#lens)"/><path d="M1068.5 55.5 v-3.5 h3.5 M1076 52.0 h3.5 v3.5 M1079.5 59.5 v3.5 h-3.5 M1072 63.0 h-3.5 v-3.5" stroke="#f03030" stroke-width="1.8" fill="none"/></g><g><line x1="1127" y1="64.5" x2="1135" y2="72.5" stroke="#555" stroke-width="3.6" stroke-linecap="round"/><line x1="1127" y1="64.5" x2="1135" y2="72.5" stroke="#888" stroke-width="1.4" stroke-linecap="round"/><circle cx="1120" cy="57.5" r="11" fill="#e8e8e0" stroke="#b8b8b0" stroke-width="1"/><circle cx="1120" cy="57.5" r="9" fill="url(#lens)"/><path d="M1113.5 57.5 L1119 52.5 L1119 55.5 L1127 55.5 L1127 59.5 L1119 59.5 L1119 62.5 Z" fill="#fff"/></g><rect x="1154.5" y="45.5" width="27" height="18" fill="#fff" stroke="#5b88cc" stroke-width="1"/><g><line x1="1175" y1="66.5" x2="1183" y2="74.5" stroke="#555" stroke-width="3.6" stroke-linecap="round"/><line x1="1175" y1="66.5" x2="1183" y2="74.5" stroke="#888" stroke-width="1.4" stroke-linecap="round"/><circle cx="1168" cy="59.5" r="11" fill="#e8e8e0" stroke="#b8b8b0" stroke-width="1"/><circle cx="1168" cy="59.5" r="9" fill="url(#lens)"/></g><g><line x1="1219.7" y1="64.5" x2="1227.7" y2="72.5" stroke="#555" stroke-width="3.6" stroke-linecap="round"/><line x1="1219.7" y1="64.5" x2="1227.7" y2="72.5" stroke="#888" stroke-width="1.4" stroke-linecap="round"/><circle cx="1212.7" cy="57.5" r="11" fill="#e8e8e0" stroke="#b8b8b0" stroke-width="1"/><circle cx="1212.7" cy="57.5" r="9" fill="url(#lens)"/><path d="M1212.7 46.5 v22 M1201.7 57.5 h22" stroke="#fff" stroke-width="1.8"/><path d="M1209.5 49.5 L1212.7 45.5 L1216 49.5 Z M1209.5 65.5 L1212.7 69.5 L1216 65.5 Z M1205 54.3 L1201 57.5 L1205 60.7 Z M1220.5 54.3 L1224.5 57.5 L1220.5 60.7 Z" fill="#fff" stroke="#6a9ad8" stroke-width="0.6"/></g><rect x="6.8" y="92" width="2" height="2" fill="#8a8a8a"/><rect x="6.8" y="98" width="2" height="2" fill="#8a8a8a"/><rect x="6.8" y="104" width="2" height="2" fill="#8a8a8a"/><rect x="6.8" y="110" width="2" height="2" fill="#8a8a8a"/><line x1="67.6" y1="86" x2="67.6" y2="121" stroke="#555" stroke-width="1" stroke-dasharray="1 2"/><rect x="15.5" y="88" width="42" height="30" rx="5" fill="url(#btn2)" stroke="#7c7c7c" stroke-width="1.5"/><defs><linearGradient id="btn2" x1="0" y1="0" x2="0" y2="1"><stop offset="0" stop-color="#e4e4e4"/><stop offset="0.5" stop-color="#fafafa"/><stop offset="1" stop-color="#dedede"/></linearGradient></defs><path d="M31 94 L31 108 L34 105.3 L36.5 110.5 L38.5 109.5 L36 104.3 L40.5 104.3 Z" fill="#fff" stroke="#333" stroke-width="0.9" stroke-linejoin="round"/></svg></body></html>
